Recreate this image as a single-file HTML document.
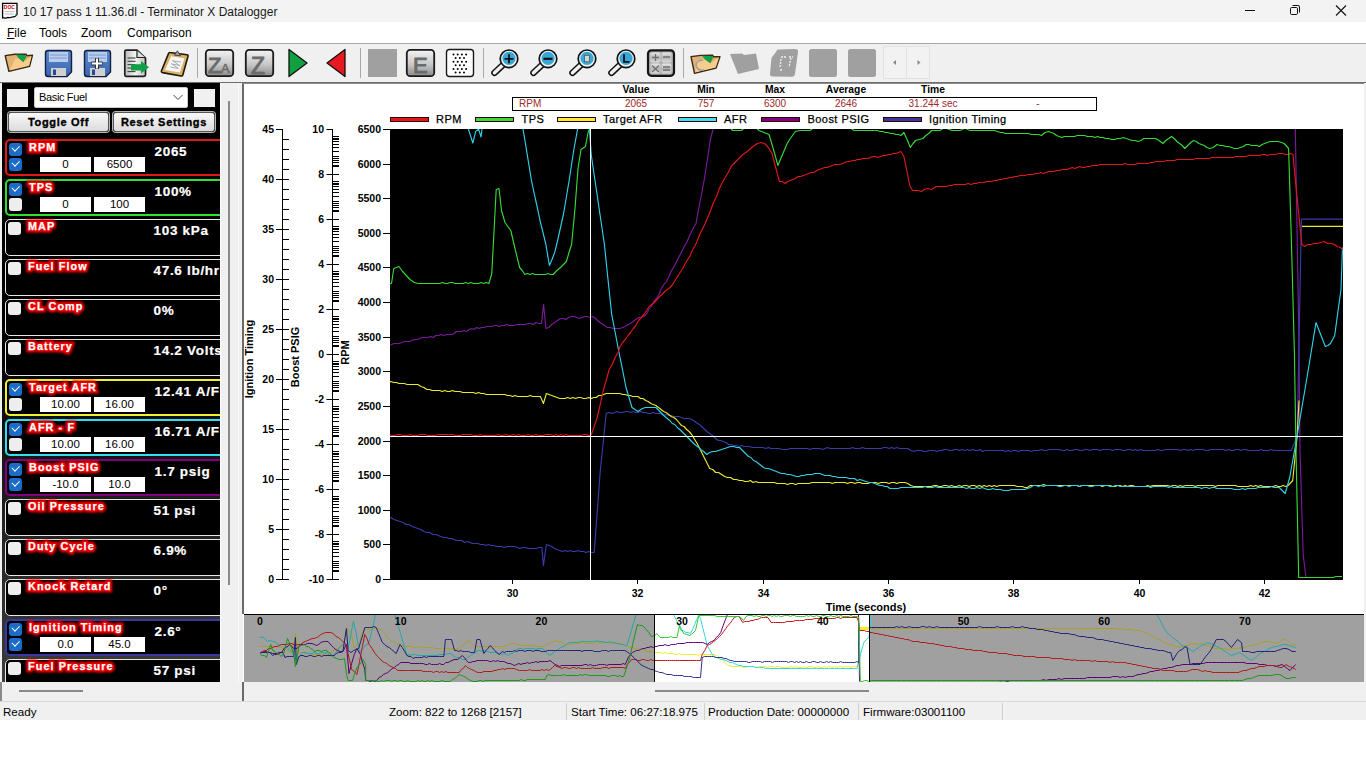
<!DOCTYPE html>
<html><head><meta charset="utf-8">
<style>
*{margin:0;padding:0;box-sizing:border-box}
html,body{width:1366px;height:770px;overflow:hidden;background:#fff;font-family:"Liberation Sans",sans-serif;position:relative}
.a{position:absolute}
#title{left:0;top:0;width:1366px;height:22px;background:#f3f3f3}
#title .t{left:23px;top:5px;font-size:12px;color:#1a1a1a;white-space:nowrap}
#menu{left:0;top:22px;width:1366px;height:22px;background:#fff;border-bottom:1px solid #a8a8a8}
#menu span{position:absolute;top:4px;font-size:12px;color:#000}
#tb{left:0;top:44px;width:1366px;height:39px;background:#f0f0f0;border-bottom:1px solid #6e6e6e}
.sep{position:absolute;top:6px;width:1px;height:29px;background:#a0a0a0}
#left{left:0;top:83px;width:243px;height:617px;background:#f0f0f0}
#lp{left:2px;top:83px;width:218px;height:599px;background:linear-gradient(#000 0%,#000 42%,#1e1e1e 70%,#3c3c3c 100%);overflow:hidden}
.item{position:absolute;left:3px;width:230px;height:37px;border:2px solid #fff;border-radius:5px;background:#000}
.cb{position:absolute;left:2px;width:13px;height:13px;border-radius:3px;background:#eee}
.cb.on{background:#1a6cc8}
.cb.on::after{content:"";position:absolute;left:3px;top:2px;width:6px;height:3.5px;border-left:1.3px solid #fff;border-bottom:1.3px solid #fff;transform:rotate(-45deg)}
.lbl{position:absolute;left:22px;top:0px;font-weight:bold;font-size:10.8px;letter-spacing:1.1px;color:#fff;white-space:nowrap;-webkit-text-stroke:0.25px #fff;text-shadow:0 0 1px #f00}
.lblg{position:absolute;left:22px;top:0px;font-weight:bold;font-size:10.8px;letter-spacing:1.1px;color:#e00;white-space:nowrap;-webkit-text-stroke:5px #e00;filter:blur(1.1px)}
.val{position:absolute;left:147.5px;top:3px;font-weight:bold;font-size:13.5px;letter-spacing:0.7px;-webkit-text-stroke:0.2px #fff;color:#fff;white-space:nowrap}
.inp{position:absolute;top:16px;width:51px;height:15px;background:#fff;font-size:11.5px;color:#000;text-align:center;line-height:15px}
#vs{left:220px;top:83px;width:23px;height:617px}
#chart{left:242px;top:83px;width:1122px;height:531px;background:#fff;border-left:2px solid #6a6a6a;border-top:1px solid #8a8a8a}
svg text{font-family:"Liberation Sans",sans-serif}
.ax{font-weight:bold;font-size:10.5px;fill:#000}
.lg{font-size:11px;fill:#000;letter-spacing:0.45px;stroke:#000;stroke-width:0.25px}
.th{font-weight:bold;font-size:10.3px;fill:#000}
.td{font-size:10px;fill:#a02828}
#status{left:0;top:701px;width:1366px;height:19px;background:#f0f0f0;border-top:1px solid #d8d8d8}
#status span{position:absolute;top:3px;font-size:11.6px;color:#000;white-space:nowrap}
#status i{position:absolute;top:1px;width:1px;height:17px;background:#d0d0d0}
</style></head><body>
<div id="title" class="a">
 <svg class="a" style="left:0;top:0" width="20" height="20" viewBox="0 0 20 20">
  <path d="M2.6 3.4 H17 V14.5 L15.2 16.3 C13.8 17.4 12.8 16.4 11.2 17.3 C9.6 18.3 8.2 16.9 6.6 17.8 C5 18.6 4 17.4 2.6 17.9 Z" fill="#fff" stroke="#000" stroke-width="1.3"/>
  <text x="3.8" y="9" font-size="5" font-weight="bold" fill="#c00" style="font-family:'Liberation Sans'">DOC</text>
  <line x1="5" y1="11.6" x2="14.5" y2="11.6" stroke="#aaa" stroke-width="0.8"/>
  <line x1="5" y1="14" x2="14" y2="14" stroke="#aaa" stroke-width="0.8"/>
  <path d="M16.5 14 L15.3 15.8" stroke="#2a8a8a" stroke-width="1.2"/>
 </svg>
 <div class="a t">10 17 pass 1 11.36.dl - Terminator X Datalogger</div>
 <svg class="a" style="left:1240px;top:0" width="126" height="22">
  <line x1="5" y1="10.5" x2="15" y2="10.5" stroke="#111" stroke-width="1"/>
  <rect x="50.5" y="7.5" width="7" height="7" rx="1.2" fill="none" stroke="#111"/>
  <path d="M52.5 5.5 H58 A1.5 1.5 0 0 1 59.5 7 V12.5" fill="none" stroke="#111"/>
  <path d="M96 5.5 L106 15.5 M106 5.5 L96 15.5" stroke="#111" stroke-width="1.1"/>
 </svg>
</div>
<div id="menu" class="a">
 <span style="left:7px"><u>F</u>ile</span>
 <span style="left:39px">Tools</span>
 <span style="left:81px">Zoom</span>
 <span style="left:127px">Comparison</span>
</div>
<div id="tb" class="a">
 <svg class="a" style="left:0;top:-1px" width="1366" height="40" viewBox="0 43 1366 40">
<defs><linearGradient id="zg" x1="0" y1="0" x2="0" y2="1"><stop offset="0" stop-color="#f4f4f4"/><stop offset="0.55" stop-color="#c8c8c8"/><stop offset="1" stop-color="#8a8a8a"/></linearGradient><linearGradient id="fl" x1="0" y1="0" x2="0" y2="1"><stop offset="0" stop-color="#5a8ad0"/><stop offset="1" stop-color="#3a66b0"/></linearGradient></defs>
<path d="M5.2 55.6 L14.8 54.3 L26 54.1 L27 55.8 L32.5 55.1 L29.6 66.2 L8.9 71.3 Z" fill="#e2b274" stroke="#3a2810" stroke-width="1.4" stroke-linejoin="round"/>
<path d="M9.6 70.4 L15.3 58.8 L19 58.3 L23.5 62 L31.5 56.4 L29 65.8 Z" fill="#f8cc8a"/>
<path d="M15.8 54.6 L25.6 55 L26.2 57.5 L23.2 62.2 L18.7 58.3 Z" fill="#10a048"/>
<path d="M48 50.5 H69 Q71.5 50.5 71.5 53 V72 L67 76.5 H48 Q45.5 76.5 45.5 74 V53 Q45.5 50.5 48 50.5 Z" fill="url(#fl)" stroke="#142040" stroke-width="1.4"/>
<rect x="49" y="52" width="19" height="10" fill="#b8ccec"/>
<line x1="50" y1="55" x2="67" y2="55" stroke="#7090c8" stroke-width="0.8"/><line x1="50" y1="58" x2="67" y2="58" stroke="#7090c8" stroke-width="0.8"/>
<rect x="51" y="68" width="15" height="8" fill="#d0d0d0"/><rect x="53" y="69.5" width="3" height="5.5" fill="#2a4a90"/>
<path d="M87 50.5 H108 Q110.5 50.5 110.5 53 V72 L106 76.5 H87 Q84.5 76.5 84.5 74 V53 Q84.5 50.5 87 50.5 Z" fill="url(#fl)" stroke="#142040" stroke-width="1.4"/>
<rect x="88" y="52" width="19" height="10" fill="#b8ccec"/>
<line x1="89" y1="55" x2="106" y2="55" stroke="#7090c8" stroke-width="0.8"/><line x1="89" y1="58" x2="106" y2="58" stroke="#7090c8" stroke-width="0.8"/>
<rect x="90" y="68" width="15" height="8" fill="#d0d0d0"/><rect x="92" y="69.5" width="3" height="5.5" fill="#2a4a90"/>
<path d="M97 58 V69 M91.5 63.5 H102.5" stroke="#333" stroke-width="4"/><path d="M97 58.5 V68.5 M92 63.5 H102" stroke="#fff" stroke-width="2"/>
<defs><linearGradient id="dg" x1="0" y1="0" x2="1" y2="0"><stop offset="0" stop-color="#b8b8b8"/><stop offset="0.5" stop-color="#f4f4f4"/><stop offset="1" stop-color="#c0c0c0"/></linearGradient></defs>
<path d="M126 50.2 H137 L145.5 58.2 V75 Q145.5 76.3 144 76.3 H126 Q124.8 76.3 124.8 75 V51.5 Q124.8 50.2 126 50.2 Z" fill="url(#dg)" stroke="#202020" stroke-width="1.7" stroke-linejoin="round"/>
<path d="M137 50.5 V57.5 H145.2" fill="#e0e0e0" stroke="#202020" stroke-width="1.2"/>
<line x1="127.5" y1="58" x2="135.5" y2="58" stroke="#404040" stroke-width="1.1"/>
<line x1="127.5" y1="61.3" x2="135.5" y2="61.3" stroke="#404040" stroke-width="1.1"/>
<line x1="127.5" y1="64.6" x2="135.5" y2="64.6" stroke="#404040" stroke-width="1.1"/>
<line x1="127.5" y1="68" x2="135.5" y2="68" stroke="#404040" stroke-width="1.1"/>
<line x1="127.5" y1="71.6" x2="135.5" y2="71.6" stroke="#404040" stroke-width="1.1"/>
<path d="M131 64.3 H141 V61 L149 67.2 L141 73.6 V70.6 H131 Z" fill="#10a048"/>
<path d="M170 52.5 L187 54.8 Q188.3 55 188 56.3 L182.8 75 Q182.4 76.3 181 76 L162.5 72.6 Q161 72.2 161.5 70.8 L168.5 53.6 Q169 52.3 170 52.5 Z" fill="#d8b068" stroke="#201808" stroke-width="1.6" stroke-linejoin="round"/>
<path d="M171.2 56.2 L184.5 58.2 L179.8 72.6 L165 70 Z" fill="#f6f6f6"/>
<path d="M174.5 55.2 L177.4 50.8 L180.5 55.8 Z" fill="#a0a0a0" stroke="#303030" stroke-width="0.8"/>
<path d="M173 61 L181 62 M172 64 L180 65.5 M170.5 67 L178.5 68.5 M172 60 L180 66 M171 63.5 L178 68" stroke="#999" stroke-width="0.8"/>
<line x1="197.5" y1="48" x2="197.5" y2="78" stroke="#a8a8a8"/>
<line x1="360.5" y1="48" x2="360.5" y2="78" stroke="#a8a8a8"/>
<line x1="483.5" y1="48" x2="483.5" y2="78" stroke="#a8a8a8"/>
<line x1="683.5" y1="48" x2="683.5" y2="78" stroke="#a8a8a8"/>
<rect x="205.8" y="49.8" width="27.4" height="26.4" rx="3.5" fill="url(#zg)" stroke="#1a1a1a" stroke-width="1.8"/>
<rect x="245.8" y="49.8" width="27.4" height="26.4" rx="3.5" fill="url(#zg)" stroke="#1a1a1a" stroke-width="1.8"/>
<text x="208" y="73" font-size="22" fill="#6a6a6a" stroke="#6a6a6a" stroke-width="0.9" style="font-family:'Liberation Sans'">Z</text><text x="221" y="73" font-size="13" fill="#6a6a6a" stroke="#6a6a6a" stroke-width="0.5" style="font-family:'Liberation Sans'">A</text>
<text x="251" y="73.5" font-size="23" fill="#6a6a6a" stroke="#6a6a6a" stroke-width="0.9" style="font-family:'Liberation Sans'">Z</text>
<path d="M289 49.5 L307 63 L289 76.5 Z" fill="#10a040" stroke="#101010" stroke-width="1.3" stroke-linejoin="round"/>
<path d="M345 49.5 L327 63 L345 76.5 Z" fill="#e81820" stroke="#101010" stroke-width="1.3" stroke-linejoin="round"/>
<rect x="368" y="49" width="29" height="28" fill="#a0a0a0"/>
<rect x="406.8" y="49.8" width="27.4" height="26.4" rx="3.5" fill="url(#zg)" stroke="#1a1a1a" stroke-width="1.8"/>
<text x="413" y="73" font-size="22" fill="#6a6a6a" stroke="#6a6a6a" stroke-width="0.9" style="font-family:'Liberation Sans'">E</text>
<rect x="446.5" y="49.5" width="27" height="27" rx="3" fill="#fff" stroke="#1a1a1a" stroke-width="1.4"/>
<circle cx="453.5" cy="54.5" r="1" fill="#000"/><circle cx="457.7" cy="54.5" r="1" fill="#000"/><circle cx="461.9" cy="54.5" r="1" fill="#000"/><circle cx="466.1" cy="54.5" r="1" fill="#000"/><circle cx="455.6" cy="58.1" r="1" fill="#000"/><circle cx="459.8" cy="58.1" r="1" fill="#000"/><circle cx="464.0" cy="58.1" r="1" fill="#000"/><circle cx="453.5" cy="61.7" r="1" fill="#000"/><circle cx="457.7" cy="61.7" r="1" fill="#000"/><circle cx="461.9" cy="61.7" r="1" fill="#000"/><circle cx="466.1" cy="61.7" r="1" fill="#000"/><circle cx="455.6" cy="65.3" r="1" fill="#000"/><circle cx="459.8" cy="65.3" r="1" fill="#000"/><circle cx="464.0" cy="65.3" r="1" fill="#000"/><circle cx="453.5" cy="68.9" r="1" fill="#000"/><circle cx="457.7" cy="68.9" r="1" fill="#000"/><circle cx="461.9" cy="68.9" r="1" fill="#000"/><circle cx="466.1" cy="68.9" r="1" fill="#000"/><circle cx="455.6" cy="72.5" r="1" fill="#000"/><circle cx="459.8" cy="72.5" r="1" fill="#000"/><circle cx="464.0" cy="72.5" r="1" fill="#000"/>
<path d="M502.5 65.3 L494.5 72.8" stroke="#101010" stroke-width="6.5" stroke-linecap="round"/>
<path d="M502.5 65.3 L494.5 72.8" stroke="#f0f0f0" stroke-width="3.6" stroke-linecap="round"/>
<circle cx="509" cy="58.8" r="8.8" fill="#e8f4f8" stroke="#101010" stroke-width="1.7"/>
<circle cx="509" cy="58.3" r="6.6" fill="#3aa6d6"/>
<path d="M509 54.3 V63.3 M504.5 58.8 H513.5" stroke="#101010" stroke-width="1.8"/>
<path d="M541.5 65.3 L533.5 72.8" stroke="#101010" stroke-width="6.5" stroke-linecap="round"/>
<path d="M541.5 65.3 L533.5 72.8" stroke="#f0f0f0" stroke-width="3.6" stroke-linecap="round"/>
<circle cx="548" cy="58.8" r="8.8" fill="#e8f4f8" stroke="#101010" stroke-width="1.7"/>
<circle cx="548" cy="58.3" r="6.6" fill="#3aa6d6"/>
<path d="M543.5 58.8 H552.5" stroke="#101010" stroke-width="2.2"/>
<path d="M580.5 65.3 L572.5 72.8" stroke="#101010" stroke-width="6.5" stroke-linecap="round"/>
<path d="M580.5 65.3 L572.5 72.8" stroke="#f0f0f0" stroke-width="3.6" stroke-linecap="round"/>
<circle cx="587" cy="58.8" r="8.8" fill="#e8f4f8" stroke="#101010" stroke-width="1.7"/>
<circle cx="587" cy="58.3" r="6.6" fill="#3aa6d6"/>
<rect x="584.5" y="55.3" width="5" height="6.5" fill="#c8d8e0" stroke="#555" stroke-width="0.8"/>
<path d="M619.5 65.3 L611.5 72.8" stroke="#101010" stroke-width="6.5" stroke-linecap="round"/>
<path d="M619.5 65.3 L611.5 72.8" stroke="#f0f0f0" stroke-width="3.6" stroke-linecap="round"/>
<circle cx="626" cy="58.8" r="8.8" fill="#e8f4f8" stroke="#101010" stroke-width="1.7"/>
<circle cx="626" cy="58.3" r="6.6" fill="#3aa6d6"/>
<path d="M624 54.3 V61.8 H629.5" fill="none" stroke="#101010" stroke-width="1.8"/>
<defs><linearGradient id="cg" x1="0" y1="0" x2="0" y2="1"><stop offset="0" stop-color="#e8e8e8"/><stop offset="0.5" stop-color="#b8b8b8"/><stop offset="1" stop-color="#d8d8d8"/></linearGradient></defs>
<rect x="648" y="50.3" width="26" height="25.5" rx="3.5" fill="#b0b0b0" stroke="#151515" stroke-width="2.2"/>
<rect x="650.5" y="52.5" width="10" height="10" rx="2" fill="url(#cg)"/>
<rect x="661.5" y="52.5" width="10" height="10" rx="2" fill="url(#cg)"/>
<rect x="650.5" y="63.5" width="10" height="10" rx="2" fill="url(#cg)"/>
<rect x="661.5" y="63.5" width="10" height="10" rx="2" fill="url(#cg)"/>
<path d="M652 57.5 H659 M655.5 54 V61 M663 57 H670 M652 65.5 L659 72 M659 65.5 L652 72 M663 67 H670 M663 70 H670" stroke="#707070" stroke-width="1.3"/>
<path d="M691 56.6 L700.9 55.4 L712.6 55.1 L713.5 56.8 L720 56.6 L716.1 68 L694.5 73.3 Z" fill="#e2b274" stroke="#3a2810" stroke-width="1.4" stroke-linejoin="round"/>
<path d="M695 72.5 L697 60 L704 59 L710.3 63.3 L719 57.5 L715.6 67.5 Z" fill="#f8cc8a"/>
<path d="M702 55.7 L712.6 56 L713 58 L710.3 63.3 L705 59.5 Z" fill="#10a048"/>
<path d="M703 60.5 A5 5 0 1 0 703.5 69.5" fill="none" stroke="#a0a0a0" stroke-width="1.6"/>
<path d="M730 54 L742 53.5 L744 55 L756 53.5 L759 69 L738 74 Z" fill="#a0a0a0"/>
<path d="M777 50.5 Q776 49.5 779 49.5 L795 49 Q798.5 49 798 52 L795 74 Q794.5 76.8 792 76.8 L773 76.5 Q769.5 76.5 770 73.5 L771.5 58 Z" fill="#a0a0a0"/>
<path d="M781 57 H786 M789 57 H793 M791 58 L789 67 M781 59 L780 67 M780 70 H782" stroke="#f0f0f0" stroke-width="1.3" stroke-dasharray="2 1"/>
<rect x="809" y="49" width="28" height="28" rx="2.5" fill="#a0a0a0"/>
<rect x="848" y="49" width="28" height="28" rx="2.5" fill="#a0a0a0"/>
<rect x="883.5" y="46.5" width="23" height="32" fill="#f2f2f2" stroke="#e2e2e2"/><rect x="906.5" y="46.5" width="23" height="32" fill="#f2f2f2" stroke="#e2e2e2"/>
<path d="M896 60 L893 62.5 L896 65 Z" fill="#888"/><path d="M917.5 60 L920.5 62.5 L917.5 65 Z" fill="#888"/>
</svg>
</div>
<div id="left" class="a"></div>
<div id="lp" class="a">
 <div class="a" style="left:5px;top:6px;width:21px;height:18px;background:#f0f0f0"></div>
<div class="a" style="left:32px;top:4px;width:154px;height:21px;background:#fff;border:1px solid #c8c8c8;border-radius:2px;font-size:11px;letter-spacing:-0.35px;line-height:19px;padding-left:4px;color:#000">Basic Fuel<svg class="a" style="left:138px;top:6px" width="10" height="7"><path d="M0.5 1 L5 5.5 L9.5 1" fill="none" stroke="#444" stroke-width="1"/></svg></div>
<div class="a" style="left:192px;top:6px;width:21px;height:18px;background:#f0f0f0"></div>
<div style="position:absolute;top:29px;height:20px;border:1px solid #555;border-radius:3px;background:linear-gradient(#f8f8f8,#dcdcdc);font-weight:bold;font-size:11px;letter-spacing:0.7px;-webkit-text-stroke:0.35px #000;text-align:center;line-height:19px;color:#000;box-shadow:0 0 0 1px #b8b8b8;left:6px;width:101px">Toggle Off</div>
<div style="position:absolute;top:29px;height:20px;border:1px solid #555;border-radius:3px;background:linear-gradient(#f8f8f8,#dcdcdc);font-weight:bold;font-size:11px;letter-spacing:0.7px;-webkit-text-stroke:0.35px #000;text-align:center;line-height:19px;color:#000;box-shadow:0 0 0 1px #b8b8b8;left:111px;width:102px">Reset Settings</div>
<div class="item" style="top:56px;border-color:#e01818;border-width:2px">
<div class="cb on" style="top:2px"></div>
<div class="cb on" style="top:17px"></div>
<div class="inp" style="left:33px">0</div><div class="inp" style="left:87px">6500</div>
<div class="lblg">RPM</div><div class="lbl">RPM</div><div class="val">2065</div>
</div>
<div class="item" style="top:96px;border-color:#30e030;border-width:2px">
<div class="cb on" style="top:2px"></div>
<div class="cb" style="top:17px"></div>
<div class="inp" style="left:33px">0</div><div class="inp" style="left:87px">100</div>
<div class="lblg">TPS</div><div class="lbl">TPS</div><div class="val">100%</div>
</div>
<div class="item" style="top:136px;border-color:#e8e8e8;border-width:1.5px">
<div class="cb" style="top:2px"></div>
<div class="lblg">MAP</div><div class="lbl">MAP</div><div class="val">103 kPa</div>
</div>
<div class="item" style="top:176px;border-color:#e8e8e8;border-width:1.5px">
<div class="cb" style="top:2px"></div>
<div class="lblg">Fuel Flow</div><div class="lbl">Fuel Flow</div><div class="val">47.6 lb/hr</div>
</div>
<div class="item" style="top:216px;border-color:#e8e8e8;border-width:1.5px">
<div class="cb" style="top:2px"></div>
<div class="lblg">CL Comp</div><div class="lbl">CL Comp</div><div class="val">0%</div>
</div>
<div class="item" style="top:256px;border-color:#e8e8e8;border-width:1.5px">
<div class="cb" style="top:2px"></div>
<div class="lblg">Battery</div><div class="lbl">Battery</div><div class="val">14.2 Volts</div>
</div>
<div class="item" style="top:296px;border-color:#f0f030;border-width:2px">
<div class="cb on" style="top:2px"></div>
<div class="cb" style="top:17px"></div>
<div class="inp" style="left:33px">10.00</div><div class="inp" style="left:87px">16.00</div>
<div class="lblg">Target AFR</div><div class="lbl">Target AFR</div><div class="val">12.41 A/F</div>
</div>
<div class="item" style="top:336px;border-color:#30e0f0;border-width:2px">
<div class="cb on" style="top:2px"></div>
<div class="cb" style="top:17px"></div>
<div class="inp" style="left:33px">10.00</div><div class="inp" style="left:87px">16.00</div>
<div class="lblg">AFR - F</div><div class="lbl">AFR - F</div><div class="val">16.71 A/F</div>
</div>
<div class="item" style="top:376px;border-color:#800080;border-width:2px">
<div class="cb on" style="top:2px"></div>
<div class="cb on" style="top:17px"></div>
<div class="inp" style="left:33px">-10.0</div><div class="inp" style="left:87px">10.0</div>
<div class="lblg">Boost PSIG</div><div class="lbl">Boost PSIG</div><div class="val">1.7 psig</div>
</div>
<div class="item" style="top:416px;border-color:#e8e8e8;border-width:1.5px">
<div class="cb" style="top:2px"></div>
<div class="lblg">Oil Pressure</div><div class="lbl">Oil Pressure</div><div class="val">51 psi</div>
</div>
<div class="item" style="top:456px;border-color:#e8e8e8;border-width:1.5px">
<div class="cb" style="top:2px"></div>
<div class="lblg">Duty Cycle</div><div class="lbl">Duty Cycle</div><div class="val">6.9%</div>
</div>
<div class="item" style="top:496px;border-color:#e8e8e8;border-width:1.5px">
<div class="cb" style="top:2px"></div>
<div class="lblg">Knock Retard</div><div class="lbl">Knock Retard</div><div class="val">0°</div>
</div>
<div class="item" style="top:536px;border-color:#3838a0;border-width:2px">
<div class="cb on" style="top:2px"></div>
<div class="cb on" style="top:17px"></div>
<div class="inp" style="left:33px">0.0</div><div class="inp" style="left:87px">45.0</div>
<div class="lblg">Ignition Timing</div><div class="lbl">Ignition Timing</div><div class="val">2.6°</div>
</div>
<div class="item" style="top:576px;border-color:#e8e8e8;border-width:1.5px">
<div class="cb" style="top:2px"></div>
<div class="lblg">Fuel Pressure</div><div class="lbl">Fuel Pressure</div><div class="val">57 psi</div>
</div>
</div>
<div id="vs" class="a">
 <div class="a" style="left:0;top:0;width:1px;height:599px;background:#fff"></div>
 <div class="a" style="left:18px;top:0;width:1px;height:617px;background:#fafafa"></div>
 <div class="a" style="left:8px;top:18px;width:2px;height:484px;background:#8a8a8a"></div>
</div>
<div class="a" style="left:0;top:682px;width:243px;height:19px;background:#f0f0f0;border-left:2px solid #8a8a8a"><div class="a" style="left:17px;top:8px;width:64px;height:2px;background:#8a8a8a"></div></div>
<div id="chart" class="a"></div>
<svg class="a" style="left:0;top:0" width="1366" height="700">
 <rect x="390.5" y="117.5" width="38" height="4" fill="#e01818" stroke="#300" stroke-width="1"/>
<text x="436" y="123" class="lg">RPM</text>
<rect x="475.5" y="117.5" width="38" height="4" fill="#38d838" stroke="#300" stroke-width="1"/>
<text x="521.5" y="123" class="lg">TPS</text>
<rect x="557.5" y="117.5" width="38" height="4" fill="#f0f030" stroke="#300" stroke-width="1"/>
<text x="603" y="123" class="lg">Target AFR</text>
<rect x="678.5" y="117.5" width="38" height="4" fill="#40e0f0" stroke="#300" stroke-width="1"/>
<text x="724" y="123" class="lg">AFR</text>
<rect x="761.5" y="117.5" width="38" height="4" fill="#800080" stroke="#300" stroke-width="1"/>
<text x="807.5" y="123" class="lg">Boost PSIG</text>
<rect x="883.5" y="117.5" width="38" height="4" fill="#3838a0" stroke="#300" stroke-width="1"/>
<text x="929" y="123" class="lg">Ignition Timing</text>
<rect x="512.5" y="97.5" width="584" height="13" fill="#fff" stroke="#000" stroke-width="1"/>
<text x="636" y="93" text-anchor="middle" class="th">Value</text>
<text x="706" y="93" text-anchor="middle" class="th">Min</text>
<text x="775" y="93" text-anchor="middle" class="th">Max</text>
<text x="846" y="93" text-anchor="middle" class="th">Average</text>
<text x="933" y="93" text-anchor="middle" class="th">Time</text>
<text x="519" y="107" class="td">RPM</text>
<text x="636" y="107" text-anchor="middle" class="td">2065</text>
<text x="706" y="107" text-anchor="middle" class="td">757</text>
<text x="775" y="107" text-anchor="middle" class="td">6300</text>
<text x="846" y="107" text-anchor="middle" class="td">2646</text>
<text x="933" y="107" text-anchor="middle" class="td">31.244 sec</text>
<text x="1038" y="107" text-anchor="middle" class="td">-</text>
 <line x1="282.5" y1="129" x2="282.5" y2="580" stroke="#000"/>
<line x1="276" y1="579.5" x2="289" y2="579.5" stroke="#000"/>
<text x="274" y="583.1" text-anchor="end" class="ax">0</text>
<line x1="282.5" y1="569.5" x2="289" y2="569.5" stroke="#000"/>
<line x1="282.5" y1="559.5" x2="289" y2="559.5" stroke="#000"/>
<line x1="282.5" y1="549.5" x2="289" y2="549.5" stroke="#000"/>
<line x1="282.5" y1="539.5" x2="289" y2="539.5" stroke="#000"/>
<line x1="276" y1="529.5" x2="289" y2="529.5" stroke="#000"/>
<text x="274" y="533.1" text-anchor="end" class="ax">5</text>
<line x1="282.5" y1="519.5" x2="289" y2="519.5" stroke="#000"/>
<line x1="282.5" y1="509.5" x2="289" y2="509.5" stroke="#000"/>
<line x1="282.5" y1="499.5" x2="289" y2="499.5" stroke="#000"/>
<line x1="282.5" y1="489.5" x2="289" y2="489.5" stroke="#000"/>
<line x1="276" y1="479.5" x2="289" y2="479.5" stroke="#000"/>
<text x="274" y="483.1" text-anchor="end" class="ax">10</text>
<line x1="282.5" y1="469.5" x2="289" y2="469.5" stroke="#000"/>
<line x1="282.5" y1="459.5" x2="289" y2="459.5" stroke="#000"/>
<line x1="282.5" y1="449.5" x2="289" y2="449.5" stroke="#000"/>
<line x1="282.5" y1="439.5" x2="289" y2="439.5" stroke="#000"/>
<line x1="276" y1="429.5" x2="289" y2="429.5" stroke="#000"/>
<text x="274" y="433.1" text-anchor="end" class="ax">15</text>
<line x1="282.5" y1="419.5" x2="289" y2="419.5" stroke="#000"/>
<line x1="282.5" y1="409.5" x2="289" y2="409.5" stroke="#000"/>
<line x1="282.5" y1="399.5" x2="289" y2="399.5" stroke="#000"/>
<line x1="282.5" y1="389.5" x2="289" y2="389.5" stroke="#000"/>
<line x1="276" y1="379.5" x2="289" y2="379.5" stroke="#000"/>
<text x="274" y="383.1" text-anchor="end" class="ax">20</text>
<line x1="282.5" y1="369.5" x2="289" y2="369.5" stroke="#000"/>
<line x1="282.5" y1="359.5" x2="289" y2="359.5" stroke="#000"/>
<line x1="282.5" y1="349.5" x2="289" y2="349.5" stroke="#000"/>
<line x1="282.5" y1="339.5" x2="289" y2="339.5" stroke="#000"/>
<line x1="276" y1="329.5" x2="289" y2="329.5" stroke="#000"/>
<text x="274" y="333.1" text-anchor="end" class="ax">25</text>
<line x1="282.5" y1="319.5" x2="289" y2="319.5" stroke="#000"/>
<line x1="282.5" y1="309.5" x2="289" y2="309.5" stroke="#000"/>
<line x1="282.5" y1="299.5" x2="289" y2="299.5" stroke="#000"/>
<line x1="282.5" y1="289.5" x2="289" y2="289.5" stroke="#000"/>
<line x1="276" y1="279.5" x2="289" y2="279.5" stroke="#000"/>
<text x="274" y="283.1" text-anchor="end" class="ax">30</text>
<line x1="282.5" y1="269.5" x2="289" y2="269.5" stroke="#000"/>
<line x1="282.5" y1="259.5" x2="289" y2="259.5" stroke="#000"/>
<line x1="282.5" y1="249.5" x2="289" y2="249.5" stroke="#000"/>
<line x1="282.5" y1="239.5" x2="289" y2="239.5" stroke="#000"/>
<line x1="276" y1="229.5" x2="289" y2="229.5" stroke="#000"/>
<text x="274" y="233.1" text-anchor="end" class="ax">35</text>
<line x1="282.5" y1="219.5" x2="289" y2="219.5" stroke="#000"/>
<line x1="282.5" y1="209.5" x2="289" y2="209.5" stroke="#000"/>
<line x1="282.5" y1="199.5" x2="289" y2="199.5" stroke="#000"/>
<line x1="282.5" y1="189.5" x2="289" y2="189.5" stroke="#000"/>
<line x1="276" y1="179.5" x2="289" y2="179.5" stroke="#000"/>
<text x="274" y="183.1" text-anchor="end" class="ax">40</text>
<line x1="282.5" y1="169.5" x2="289" y2="169.5" stroke="#000"/>
<line x1="282.5" y1="159.5" x2="289" y2="159.5" stroke="#000"/>
<line x1="282.5" y1="149.5" x2="289" y2="149.5" stroke="#000"/>
<line x1="282.5" y1="139.5" x2="289" y2="139.5" stroke="#000"/>
<line x1="276" y1="129.5" x2="282.5" y2="129.5" stroke="#000"/>
<text x="274" y="133.1" text-anchor="end" class="ax">45</text>
<line x1="332.5" y1="129" x2="332.5" y2="580" stroke="#000"/>
<line x1="326.5" y1="579.5" x2="339" y2="579.5" stroke="#000"/>
<text x="324" y="583.1" text-anchor="end" class="ax">-10</text>
<line x1="326.5" y1="534.5" x2="339" y2="534.5" stroke="#000"/>
<text x="324" y="538.1" text-anchor="end" class="ax">-8</text>
<line x1="326.5" y1="489.5" x2="339" y2="489.5" stroke="#000"/>
<text x="324" y="493.1" text-anchor="end" class="ax">-6</text>
<line x1="326.5" y1="444.5" x2="339" y2="444.5" stroke="#000"/>
<text x="324" y="448.1" text-anchor="end" class="ax">-4</text>
<line x1="326.5" y1="399.5" x2="339" y2="399.5" stroke="#000"/>
<text x="324" y="403.1" text-anchor="end" class="ax">-2</text>
<line x1="326.5" y1="354.5" x2="339" y2="354.5" stroke="#000"/>
<text x="324" y="358.1" text-anchor="end" class="ax">0</text>
<line x1="326.5" y1="309.5" x2="339" y2="309.5" stroke="#000"/>
<text x="324" y="313.1" text-anchor="end" class="ax">2</text>
<line x1="326.5" y1="264.5" x2="339" y2="264.5" stroke="#000"/>
<text x="324" y="268.1" text-anchor="end" class="ax">4</text>
<line x1="326.5" y1="219.5" x2="339" y2="219.5" stroke="#000"/>
<text x="324" y="223.1" text-anchor="end" class="ax">6</text>
<line x1="326.5" y1="174.5" x2="339" y2="174.5" stroke="#000"/>
<text x="324" y="178.1" text-anchor="end" class="ax">8</text>
<line x1="326.5" y1="129.5" x2="332.5" y2="129.5" stroke="#000"/>
<text x="324" y="133.1" text-anchor="end" class="ax">10</text>
<line x1="332.5" y1="136.5" x2="339" y2="136.5" stroke="#000"/>
<line x1="332.5" y1="138.5" x2="339" y2="138.5" stroke="#000"/>
<line x1="332.5" y1="139.5" x2="339" y2="139.5" stroke="#000"/>
<line x1="332.5" y1="141.5" x2="339" y2="141.5" stroke="#000"/>
<line x1="332.5" y1="144.5" x2="339" y2="144.5" stroke="#000"/>
<line x1="332.5" y1="147.5" x2="339" y2="147.5" stroke="#000"/>
<line x1="332.5" y1="151.5" x2="339" y2="151.5" stroke="#000"/>
<line x1="332.5" y1="156.5" x2="339" y2="156.5" stroke="#000"/>
<line x1="332.5" y1="158.5" x2="339" y2="158.5" stroke="#000"/>
<line x1="332.5" y1="160.5" x2="339" y2="160.5" stroke="#000"/>
<line x1="332.5" y1="162.5" x2="339" y2="162.5" stroke="#000"/>
<line x1="332.5" y1="165.5" x2="339" y2="165.5" stroke="#000"/>
<line x1="332.5" y1="166.5" x2="339" y2="166.5" stroke="#000"/>
<line x1="332.5" y1="181.5" x2="339" y2="181.5" stroke="#000"/>
<line x1="332.5" y1="183.5" x2="339" y2="183.5" stroke="#000"/>
<line x1="332.5" y1="184.5" x2="339" y2="184.5" stroke="#000"/>
<line x1="332.5" y1="186.5" x2="339" y2="186.5" stroke="#000"/>
<line x1="332.5" y1="189.5" x2="339" y2="189.5" stroke="#000"/>
<line x1="332.5" y1="192.5" x2="339" y2="192.5" stroke="#000"/>
<line x1="332.5" y1="196.5" x2="339" y2="196.5" stroke="#000"/>
<line x1="332.5" y1="201.5" x2="339" y2="201.5" stroke="#000"/>
<line x1="332.5" y1="203.5" x2="339" y2="203.5" stroke="#000"/>
<line x1="332.5" y1="205.5" x2="339" y2="205.5" stroke="#000"/>
<line x1="332.5" y1="207.5" x2="339" y2="207.5" stroke="#000"/>
<line x1="332.5" y1="210.5" x2="339" y2="210.5" stroke="#000"/>
<line x1="332.5" y1="211.5" x2="339" y2="211.5" stroke="#000"/>
<line x1="332.5" y1="226.5" x2="339" y2="226.5" stroke="#000"/>
<line x1="332.5" y1="228.5" x2="339" y2="228.5" stroke="#000"/>
<line x1="332.5" y1="229.5" x2="339" y2="229.5" stroke="#000"/>
<line x1="332.5" y1="231.5" x2="339" y2="231.5" stroke="#000"/>
<line x1="332.5" y1="234.5" x2="339" y2="234.5" stroke="#000"/>
<line x1="332.5" y1="237.5" x2="339" y2="237.5" stroke="#000"/>
<line x1="332.5" y1="241.5" x2="339" y2="241.5" stroke="#000"/>
<line x1="332.5" y1="246.5" x2="339" y2="246.5" stroke="#000"/>
<line x1="332.5" y1="248.5" x2="339" y2="248.5" stroke="#000"/>
<line x1="332.5" y1="250.5" x2="339" y2="250.5" stroke="#000"/>
<line x1="332.5" y1="252.5" x2="339" y2="252.5" stroke="#000"/>
<line x1="332.5" y1="255.5" x2="339" y2="255.5" stroke="#000"/>
<line x1="332.5" y1="256.5" x2="339" y2="256.5" stroke="#000"/>
<line x1="332.5" y1="271.5" x2="339" y2="271.5" stroke="#000"/>
<line x1="332.5" y1="273.5" x2="339" y2="273.5" stroke="#000"/>
<line x1="332.5" y1="274.5" x2="339" y2="274.5" stroke="#000"/>
<line x1="332.5" y1="276.5" x2="339" y2="276.5" stroke="#000"/>
<line x1="332.5" y1="279.5" x2="339" y2="279.5" stroke="#000"/>
<line x1="332.5" y1="282.5" x2="339" y2="282.5" stroke="#000"/>
<line x1="332.5" y1="286.5" x2="339" y2="286.5" stroke="#000"/>
<line x1="332.5" y1="291.5" x2="339" y2="291.5" stroke="#000"/>
<line x1="332.5" y1="293.5" x2="339" y2="293.5" stroke="#000"/>
<line x1="332.5" y1="295.5" x2="339" y2="295.5" stroke="#000"/>
<line x1="332.5" y1="297.5" x2="339" y2="297.5" stroke="#000"/>
<line x1="332.5" y1="300.5" x2="339" y2="300.5" stroke="#000"/>
<line x1="332.5" y1="301.5" x2="339" y2="301.5" stroke="#000"/>
<line x1="332.5" y1="316.5" x2="339" y2="316.5" stroke="#000"/>
<line x1="332.5" y1="318.5" x2="339" y2="318.5" stroke="#000"/>
<line x1="332.5" y1="319.5" x2="339" y2="319.5" stroke="#000"/>
<line x1="332.5" y1="321.5" x2="339" y2="321.5" stroke="#000"/>
<line x1="332.5" y1="324.5" x2="339" y2="324.5" stroke="#000"/>
<line x1="332.5" y1="327.5" x2="339" y2="327.5" stroke="#000"/>
<line x1="332.5" y1="331.5" x2="339" y2="331.5" stroke="#000"/>
<line x1="332.5" y1="336.5" x2="339" y2="336.5" stroke="#000"/>
<line x1="332.5" y1="338.5" x2="339" y2="338.5" stroke="#000"/>
<line x1="332.5" y1="340.5" x2="339" y2="340.5" stroke="#000"/>
<line x1="332.5" y1="342.5" x2="339" y2="342.5" stroke="#000"/>
<line x1="332.5" y1="345.5" x2="339" y2="345.5" stroke="#000"/>
<line x1="332.5" y1="346.5" x2="339" y2="346.5" stroke="#000"/>
<line x1="332.5" y1="361.5" x2="339" y2="361.5" stroke="#000"/>
<line x1="332.5" y1="363.5" x2="339" y2="363.5" stroke="#000"/>
<line x1="332.5" y1="364.5" x2="339" y2="364.5" stroke="#000"/>
<line x1="332.5" y1="366.5" x2="339" y2="366.5" stroke="#000"/>
<line x1="332.5" y1="369.5" x2="339" y2="369.5" stroke="#000"/>
<line x1="332.5" y1="372.5" x2="339" y2="372.5" stroke="#000"/>
<line x1="332.5" y1="376.5" x2="339" y2="376.5" stroke="#000"/>
<line x1="332.5" y1="381.5" x2="339" y2="381.5" stroke="#000"/>
<line x1="332.5" y1="383.5" x2="339" y2="383.5" stroke="#000"/>
<line x1="332.5" y1="385.5" x2="339" y2="385.5" stroke="#000"/>
<line x1="332.5" y1="387.5" x2="339" y2="387.5" stroke="#000"/>
<line x1="332.5" y1="390.5" x2="339" y2="390.5" stroke="#000"/>
<line x1="332.5" y1="391.5" x2="339" y2="391.5" stroke="#000"/>
<line x1="332.5" y1="406.5" x2="339" y2="406.5" stroke="#000"/>
<line x1="332.5" y1="408.5" x2="339" y2="408.5" stroke="#000"/>
<line x1="332.5" y1="409.5" x2="339" y2="409.5" stroke="#000"/>
<line x1="332.5" y1="411.5" x2="339" y2="411.5" stroke="#000"/>
<line x1="332.5" y1="414.5" x2="339" y2="414.5" stroke="#000"/>
<line x1="332.5" y1="417.5" x2="339" y2="417.5" stroke="#000"/>
<line x1="332.5" y1="421.5" x2="339" y2="421.5" stroke="#000"/>
<line x1="332.5" y1="426.5" x2="339" y2="426.5" stroke="#000"/>
<line x1="332.5" y1="428.5" x2="339" y2="428.5" stroke="#000"/>
<line x1="332.5" y1="430.5" x2="339" y2="430.5" stroke="#000"/>
<line x1="332.5" y1="432.5" x2="339" y2="432.5" stroke="#000"/>
<line x1="332.5" y1="435.5" x2="339" y2="435.5" stroke="#000"/>
<line x1="332.5" y1="436.5" x2="339" y2="436.5" stroke="#000"/>
<line x1="332.5" y1="451.5" x2="339" y2="451.5" stroke="#000"/>
<line x1="332.5" y1="453.5" x2="339" y2="453.5" stroke="#000"/>
<line x1="332.5" y1="454.5" x2="339" y2="454.5" stroke="#000"/>
<line x1="332.5" y1="456.5" x2="339" y2="456.5" stroke="#000"/>
<line x1="332.5" y1="459.5" x2="339" y2="459.5" stroke="#000"/>
<line x1="332.5" y1="462.5" x2="339" y2="462.5" stroke="#000"/>
<line x1="332.5" y1="466.5" x2="339" y2="466.5" stroke="#000"/>
<line x1="332.5" y1="471.5" x2="339" y2="471.5" stroke="#000"/>
<line x1="332.5" y1="473.5" x2="339" y2="473.5" stroke="#000"/>
<line x1="332.5" y1="475.5" x2="339" y2="475.5" stroke="#000"/>
<line x1="332.5" y1="477.5" x2="339" y2="477.5" stroke="#000"/>
<line x1="332.5" y1="480.5" x2="339" y2="480.5" stroke="#000"/>
<line x1="332.5" y1="481.5" x2="339" y2="481.5" stroke="#000"/>
<line x1="332.5" y1="496.5" x2="339" y2="496.5" stroke="#000"/>
<line x1="332.5" y1="498.5" x2="339" y2="498.5" stroke="#000"/>
<line x1="332.5" y1="499.5" x2="339" y2="499.5" stroke="#000"/>
<line x1="332.5" y1="501.5" x2="339" y2="501.5" stroke="#000"/>
<line x1="332.5" y1="504.5" x2="339" y2="504.5" stroke="#000"/>
<line x1="332.5" y1="507.5" x2="339" y2="507.5" stroke="#000"/>
<line x1="332.5" y1="511.5" x2="339" y2="511.5" stroke="#000"/>
<line x1="332.5" y1="516.5" x2="339" y2="516.5" stroke="#000"/>
<line x1="332.5" y1="518.5" x2="339" y2="518.5" stroke="#000"/>
<line x1="332.5" y1="520.5" x2="339" y2="520.5" stroke="#000"/>
<line x1="332.5" y1="522.5" x2="339" y2="522.5" stroke="#000"/>
<line x1="332.5" y1="525.5" x2="339" y2="525.5" stroke="#000"/>
<line x1="332.5" y1="526.5" x2="339" y2="526.5" stroke="#000"/>
<line x1="332.5" y1="541.5" x2="339" y2="541.5" stroke="#000"/>
<line x1="332.5" y1="543.5" x2="339" y2="543.5" stroke="#000"/>
<line x1="332.5" y1="544.5" x2="339" y2="544.5" stroke="#000"/>
<line x1="332.5" y1="546.5" x2="339" y2="546.5" stroke="#000"/>
<line x1="332.5" y1="549.5" x2="339" y2="549.5" stroke="#000"/>
<line x1="332.5" y1="552.5" x2="339" y2="552.5" stroke="#000"/>
<line x1="332.5" y1="556.5" x2="339" y2="556.5" stroke="#000"/>
<line x1="332.5" y1="561.5" x2="339" y2="561.5" stroke="#000"/>
<line x1="332.5" y1="563.5" x2="339" y2="563.5" stroke="#000"/>
<line x1="332.5" y1="565.5" x2="339" y2="565.5" stroke="#000"/>
<line x1="332.5" y1="567.5" x2="339" y2="567.5" stroke="#000"/>
<line x1="332.5" y1="570.5" x2="339" y2="570.5" stroke="#000"/>
<line x1="332.5" y1="571.5" x2="339" y2="571.5" stroke="#000"/>
<line x1="383" y1="579.5" x2="390" y2="579.5" stroke="#000"/>
<text x="381" y="583.1" text-anchor="end" class="ax">0</text>
<line x1="383" y1="544.5" x2="390" y2="544.5" stroke="#000"/>
<text x="381" y="548.1" text-anchor="end" class="ax">500</text>
<line x1="383" y1="510.5" x2="390" y2="510.5" stroke="#000"/>
<text x="381" y="514.1" text-anchor="end" class="ax">1000</text>
<line x1="383" y1="475.5" x2="390" y2="475.5" stroke="#000"/>
<text x="381" y="479.1" text-anchor="end" class="ax">1500</text>
<line x1="383" y1="441.5" x2="390" y2="441.5" stroke="#000"/>
<text x="381" y="445.1" text-anchor="end" class="ax">2000</text>
<line x1="383" y1="406.5" x2="390" y2="406.5" stroke="#000"/>
<text x="381" y="410.1" text-anchor="end" class="ax">2500</text>
<line x1="383" y1="371.5" x2="390" y2="371.5" stroke="#000"/>
<text x="381" y="375.1" text-anchor="end" class="ax">3000</text>
<line x1="383" y1="337.5" x2="390" y2="337.5" stroke="#000"/>
<text x="381" y="341.1" text-anchor="end" class="ax">3500</text>
<line x1="383" y1="302.5" x2="390" y2="302.5" stroke="#000"/>
<text x="381" y="306.1" text-anchor="end" class="ax">4000</text>
<line x1="383" y1="267.5" x2="390" y2="267.5" stroke="#000"/>
<text x="381" y="271.1" text-anchor="end" class="ax">4500</text>
<line x1="383" y1="233.5" x2="390" y2="233.5" stroke="#000"/>
<text x="381" y="237.1" text-anchor="end" class="ax">5000</text>
<line x1="383" y1="198.5" x2="390" y2="198.5" stroke="#000"/>
<text x="381" y="202.1" text-anchor="end" class="ax">5500</text>
<line x1="383" y1="164.5" x2="390" y2="164.5" stroke="#000"/>
<text x="381" y="168.1" text-anchor="end" class="ax">6000</text>
<line x1="383" y1="129.5" x2="390" y2="129.5" stroke="#000"/>
<text x="381" y="133.1" text-anchor="end" class="ax">6500</text>
<line x1="512.5" y1="580" x2="512.5" y2="584" stroke="#000"/>
<text x="512.5" y="597" text-anchor="middle" class="ax">30</text>
<line x1="637.5" y1="580" x2="637.5" y2="584" stroke="#000"/>
<text x="637.5" y="597" text-anchor="middle" class="ax">32</text>
<line x1="763.5" y1="580" x2="763.5" y2="584" stroke="#000"/>
<text x="763.5" y="597" text-anchor="middle" class="ax">34</text>
<line x1="888.5" y1="580" x2="888.5" y2="584" stroke="#000"/>
<text x="888.5" y="597" text-anchor="middle" class="ax">36</text>
<line x1="1013.5" y1="580" x2="1013.5" y2="584" stroke="#000"/>
<text x="1013.5" y="597" text-anchor="middle" class="ax">38</text>
<line x1="1139.5" y1="580" x2="1139.5" y2="584" stroke="#000"/>
<text x="1139.5" y="597" text-anchor="middle" class="ax">40</text>
<line x1="1264.5" y1="580" x2="1264.5" y2="584" stroke="#000"/>
<text x="1264.5" y="597" text-anchor="middle" class="ax">42</text>
<text x="866" y="611" text-anchor="middle" class="ax" style="font-size:11px">Time (seconds)</text>
<text transform="translate(252.5,359) rotate(-90)" text-anchor="middle" class="ax" style="font-size:11px">Ignition Timing</text>
<text transform="translate(298.5,357) rotate(-90)" text-anchor="middle" class="ax" style="font-size:11px">Boost PSIG</text>
<text transform="translate(349,352.5) rotate(-90)" text-anchor="middle" class="ax" style="font-size:11px">RPM</text>
 <rect x="390" y="129" width="953" height="451" fill="#000"/>
<svg x="390" y="129" width="953" height="451" viewBox="390 129 953 451" overflow="hidden">
<polyline fill="none" stroke="#7a1a9a" stroke-width="1.15" stroke-linejoin="round" points="390.0,345.0 391.5,344.5 394.1,343.5 396.6,343.5 399.2,343.5 401.8,342.5 404.4,341.5 406.9,341.5 409.5,341.5 412.1,340.5 414.6,339.5 417.2,339.5 419.9,338.5 422.5,337.5 425.2,337.5 427.9,337.5 430.5,336.5 433.2,337.5 435.8,335.5 438.5,335.5 441.2,334.5 443.8,335.5 446.5,334.5 449.0,334.5 451.5,334.5 454.0,333.5 456.5,331.5 459.0,331.5 461.5,331.5 464.1,330.5 466.6,331.5 469.1,329.5 471.6,328.5 474.1,329.5 476.6,327.5 479.1,328.5 481.6,327.5 484.1,327.5 486.6,326.5 489.1,326.5 491.6,326.5 494.1,325.5 496.6,325.5 499.2,326.5 501.7,325.5 504.2,325.5 506.7,324.5 509.2,325.5 511.7,325.5 514.2,325.5 516.7,324.5 519.5,324.5 522.2,324.5 525.0,324.5 527.7,323.5 530.5,323.5 533.2,324.5 536.0,322.5 538.7,323.5 541.5,323.5 543.6,304.5 545.9,328.5 548.8,327.5 551.7,324.5 554.7,322.5 557.6,320.5 560.5,318.5 563.2,318.5 565.9,319.5 568.5,317.5 571.2,316.5 573.9,316.5 576.6,317.5 579.3,318.5 582.0,317.5 584.7,316.5 587.3,316.5 590.0,317.5 592.7,316.5 595.6,318.5 598.5,321.5 601.5,323.5 604.4,325.5 607.3,327.5 610.2,327.5 613.1,328.5 616.5,328.5 620.0,328.5 622.6,327.5 625.3,326.5 627.9,324.5 630.5,323.5 633.1,321.5 635.8,319.5 638.4,317.5 641.0,317.5 643.7,316.5 646.3,314.5 648.8,309.5 651.3,306.5 653.8,301.5 656.4,298.5 658.9,294.5 661.4,288.5 663.9,284.5 666.4,281.5 669.0,276.5 671.5,270.5 674.1,266.5 676.6,261.5 679.2,256.5 681.8,251.5 684.3,246.5 687.2,241.5 690.1,234.5 693.1,228.5 696.0,223.5 698.9,207.5 701.9,192.5 704.8,176.5 707.7,157.5 710.6,138.5 713.0,129.5"/>
<polyline fill="none" stroke="#7a1a9a" stroke-width="1.15" stroke-linejoin="round" points="1295.3,129.0 1298.8,331.7 1300.0,450.0 1303.2,555.0 1306.0,577.6"/>
<polyline fill="none" stroke="#3a3aa8" stroke-width="1.15" stroke-linejoin="round" points="390.0,518.0 391.0,517.5 394.0,519.5 397.0,520.5 400.0,521.5 403.0,522.5 406.0,524.5 409.0,524.5 411.9,526.5 414.9,527.5 417.9,528.5 420.9,529.5 423.9,531.5 426.8,532.5 429.8,532.5 432.8,534.5 435.5,534.5 438.1,535.5 440.8,536.5 443.4,537.5 446.1,537.5 448.7,538.5 451.4,538.5 454.0,539.5 456.7,540.5 459.4,540.5 462.0,540.5 464.7,542.5 467.3,541.5 470.0,542.5 472.6,543.5 475.3,543.5 477.9,543.5 480.6,544.5 483.2,544.5 485.8,545.5 488.5,544.5 491.1,545.5 493.7,545.5 496.3,546.5 498.9,546.5 501.6,546.5 504.2,547.5 506.8,546.5 509.4,546.5 512.0,546.5 514.6,546.5 517.3,547.5 519.9,548.5 522.5,547.5 525.3,547.5 528.0,548.5 530.8,548.5 533.6,548.5 536.4,548.5 539.1,547.5 541.9,547.5 543.4,565.5 546.4,544.5 549.1,545.5 551.8,546.5 554.4,548.5 557.1,549.5 559.8,550.5 562.4,551.5 565.0,550.5 567.6,551.5 570.3,550.5 572.9,551.5 575.5,551.5 578.1,550.5 580.7,551.5 583.4,551.5 586.0,552.5 588.6,551.5 591.2,552.5 594.2,552.5 597.2,512.5 600.2,471.5 603.2,442.5 606.2,413.5 608.9,412.5 611.7,413.5 614.4,412.5 617.1,411.5 619.8,412.5 622.5,412.5 625.3,411.5 628.0,411.5 630.5,412.5 633.1,411.5 635.6,412.5 638.1,412.5 640.7,411.5 643.2,412.5 645.8,412.5 648.3,413.5 650.8,413.5 653.4,412.5 655.9,413.5 658.5,413.5 661.0,413.5 663.6,415.5 666.1,414.5 668.7,415.5 671.2,415.5 673.8,416.5 676.4,416.5 678.9,416.5 681.5,417.5 684.0,418.5 686.6,418.5 689.1,418.5 691.7,419.5 694.7,421.5 697.7,423.5 700.7,425.5 703.7,428.5 706.7,431.5 709.7,433.5 712.6,435.5 715.6,438.5 718.2,440.5 720.7,440.5 723.3,441.5 725.9,442.5 728.5,444.5 731.0,444.5 733.6,445.5 736.3,445.5 738.9,446.5 741.6,445.5 744.2,446.5 746.9,446.5 749.5,446.5 752.2,447.5 754.8,447.5 757.5,447.5 760.2,447.5 762.9,447.5 765.7,448.5 768.4,447.5 771.1,448.5 773.8,448.5 776.5,448.5 779.2,448.5 782.0,449.5 784.7,449.5 787.4,449.5 789.9,448.5 792.4,448.5 794.9,448.5 797.4,448.5 799.9,448.5 802.4,448.5 804.9,448.5 807.4,448.5 809.9,449.5 812.4,448.5 814.9,448.5 817.4,448.5 819.9,448.5 822.4,449.5 825.0,448.5 827.5,447.5 830.0,448.5 832.5,448.5 835.0,448.5 837.5,448.5 840.0,448.5 842.5,448.5 845.0,448.5 847.5,448.5 850.0,448.5 852.5,447.5 855.0,448.5 857.5,448.5 860.0,448.5 862.6,447.5 865.3,448.5 867.9,448.5 870.5,448.5 873.2,448.5 875.8,448.5 878.4,448.5 881.1,448.5 883.7,447.5 886.4,447.5 889.0,448.5 891.6,447.5 894.3,448.5 896.9,447.5 899.5,448.5 902.2,448.5 904.8,448.5 907.8,448.5 910.8,450.5 913.8,451.5 916.3,450.5 918.9,450.5 921.4,450.5 924.0,451.5 926.5,451.5 929.0,450.5 931.6,450.5 934.1,450.5 936.7,451.5 939.2,450.5 941.7,450.5 944.3,449.5 946.8,449.5 949.4,450.5 951.9,450.5 954.4,449.5 957.0,449.5 959.5,450.5 962.1,449.5 964.6,450.5 967.2,449.5 969.7,450.5 972.3,449.5 974.8,450.5 977.4,450.5 980.0,449.5 982.5,451.5 985.1,450.5 987.7,450.5 990.2,450.5 992.8,450.5 995.3,450.5 997.9,450.5 1000.5,450.5 1003.0,450.5 1005.6,451.5 1008.2,450.5 1010.7,451.5 1013.3,450.5 1015.8,450.5 1018.4,451.5 1021.0,450.5 1023.5,450.5 1026.1,450.5 1028.7,450.5 1031.2,451.5 1033.8,450.5 1036.3,450.5 1038.9,450.5 1041.5,449.5 1044.0,450.5 1046.6,450.5 1049.2,449.5 1051.7,449.5 1054.3,449.5 1056.8,449.5 1059.4,449.5 1061.9,450.5 1064.5,450.5 1067.0,449.5 1069.5,450.5 1072.1,450.5 1074.6,449.5 1077.2,449.5 1079.7,450.5 1082.2,450.5 1084.8,449.5 1087.3,449.5 1089.8,450.5 1092.4,449.5 1094.9,449.5 1097.5,449.5 1100.0,450.5 1102.5,449.5 1105.0,449.5 1107.5,449.5 1110.1,449.5 1112.6,450.5 1115.1,449.5 1117.6,449.5 1120.1,449.5 1122.6,450.5 1125.2,450.5 1127.7,449.5 1130.2,449.5 1132.7,450.5 1135.2,449.5 1137.7,450.5 1140.3,449.5 1142.8,450.5 1145.3,450.5 1147.8,450.5 1150.3,450.5 1152.8,450.5 1155.3,450.5 1157.9,449.5 1160.4,450.5 1162.9,450.5 1165.4,449.5 1167.9,449.5 1170.4,449.5 1173.0,449.5 1175.5,449.5 1178.0,449.5 1180.5,450.5 1183.0,449.5 1185.5,449.5 1188.1,450.5 1190.6,449.5 1193.1,450.5 1195.6,449.5 1198.1,449.5 1200.6,449.5 1203.1,449.5 1205.7,450.5 1208.2,450.5 1210.7,449.5 1213.2,449.5 1215.7,449.5 1218.2,449.5 1220.8,449.5 1223.3,449.5 1225.8,450.5 1228.3,449.5 1230.8,450.5 1233.3,450.5 1235.9,449.5 1238.4,449.5 1240.9,450.5 1243.4,449.5 1245.9,449.5 1248.4,450.5 1250.9,450.5 1253.5,450.5 1256.0,450.5 1258.5,450.5 1261.0,449.5 1263.5,450.5 1266.0,450.5 1268.6,450.5 1271.1,449.5 1273.6,450.5 1276.1,450.5 1278.6,450.5 1281.1,450.5 1283.7,450.5 1286.2,450.5 1288.7,450.5 1291.2,450.5 1294.2,443.5 1297.2,435.5 1301.4,219.5"/>
<polyline fill="none" stroke="#3a3aa8" stroke-width="1.15" stroke-linejoin="round" points="1301.4,219.1 1304.0,219.1 1306.6,219.1 1309.2,219.1 1311.8,219.1 1314.4,219.1 1317.0,219.1 1319.6,219.1 1322.2,219.1 1324.8,219.1 1327.4,219.1 1330.0,219.1 1332.6,219.1 1335.2,219.1 1337.8,219.1 1340.4,219.1 1343.0,219.1"/>
<polyline fill="none" stroke="#e8e830" stroke-width="1.15" stroke-linejoin="round" points="390.0,382.0 391.0,381.5 393.7,382.5 396.4,382.5 399.1,383.5 401.8,383.5 404.4,383.5 407.1,384.5 409.8,384.5 412.5,384.5 415.2,384.5 417.9,384.5 420.9,386.5 423.9,387.5 426.9,389.5 429.5,389.5 432.0,390.5 434.6,390.5 437.1,390.5 439.7,390.5 442.2,391.5 444.8,390.5 447.4,391.5 449.9,391.5 452.5,390.5 455.0,391.5 457.6,391.5 460.1,391.5 462.7,392.5 465.3,392.5 468.0,392.5 470.6,392.5 473.2,392.5 475.9,393.5 478.5,392.5 481.1,393.5 483.8,393.5 486.4,394.5 489.1,394.5 491.7,394.5 494.3,394.5 497.0,394.5 499.6,394.5 502.2,394.5 504.9,394.5 507.5,395.5 510.0,395.5 512.6,396.5 515.1,395.5 517.6,396.5 520.2,396.5 522.7,396.5 525.2,396.5 527.7,396.5 530.3,395.5 532.8,396.5 535.3,396.5 537.9,396.5 540.4,396.5 543.4,403.5 546.4,393.5 549.1,394.5 551.8,395.5 554.4,396.5 557.1,397.5 559.8,398.5 562.4,398.5 565.0,398.5 567.6,397.5 570.3,398.5 572.9,397.5 575.5,398.5 578.1,397.5 580.7,397.5 583.4,398.5 586.0,398.5 588.6,397.5 591.2,398.5 593.7,397.5 596.2,397.5 598.7,395.5 601.2,395.5 603.7,394.5 606.2,393.5 609.0,393.5 611.7,393.5 614.5,393.5 617.2,393.5 620.0,393.5 622.6,394.5 625.1,394.5 627.7,395.5 630.2,395.5 632.8,396.5 635.3,396.5 637.9,396.5 640.5,398.5 643.0,398.5 645.6,400.5 648.2,401.5 650.8,403.5 653.3,404.5 655.9,405.5 658.5,407.5 661.0,409.5 663.6,411.5 666.1,412.5 668.7,414.5 671.2,416.5 673.8,417.5 676.4,419.5 678.9,422.5 681.5,425.5 684.0,426.5 686.6,429.5 689.1,431.5 691.7,434.5 694.7,439.5 697.7,444.5 700.7,450.5 703.7,456.5 706.7,462.5 709.7,468.5 712.7,469.5 715.7,472.5 718.6,472.5 721.6,474.5 724.6,476.5 727.6,477.5 730.6,477.5 733.5,479.5 736.5,479.5 739.5,480.5 742.2,480.5 744.9,481.5 747.7,481.5 750.4,480.5 753.1,482.5 755.8,481.5 758.5,482.5 761.2,482.5 764.0,482.5 766.7,482.5 769.4,482.5 772.0,482.5 774.5,482.5 777.1,483.5 779.7,483.5 782.3,483.5 784.8,483.5 787.4,484.5 790.1,483.5 792.8,483.5 795.5,484.5 798.2,483.5 800.9,483.5 803.7,483.5 806.4,483.5 809.1,483.5 811.8,482.5 814.5,482.5 817.2,482.5 819.7,482.5 822.2,482.5 824.8,482.5 827.3,482.5 829.8,482.5 832.3,483.5 834.8,482.5 837.3,482.5 839.9,482.5 842.4,482.5 844.9,482.5 847.4,483.5 849.9,482.5 852.4,482.5 855.0,483.5 857.5,482.5 860.0,482.5 862.6,483.5 865.3,483.5 867.9,483.5 870.5,482.5 873.2,482.5 875.8,482.5 878.4,483.5 881.1,482.5 883.7,482.5 886.4,482.5 889.0,483.5 891.6,482.5 894.3,482.5 896.9,483.5 899.5,482.5 902.2,482.5 904.8,482.5 907.8,483.5 910.8,485.5 913.8,486.5 916.3,486.5 918.8,486.5 921.3,486.5 923.9,486.5 926.4,486.5 928.9,486.5 931.4,486.5 933.9,485.5 936.4,485.5 939.0,486.5 941.5,486.5 944.0,485.5 946.5,485.5 949.0,486.5 951.5,485.5 954.1,486.5 956.6,486.5 959.1,485.5 961.6,486.5 964.1,485.5 966.6,485.5 969.1,486.5 971.7,485.5 974.2,485.5 976.7,486.5 979.2,485.5 981.7,486.5 984.2,485.5 986.8,486.5 989.3,485.5 991.8,486.5 994.3,485.5 996.8,486.5 999.3,485.5 1001.9,485.5 1004.4,485.5 1006.9,485.5 1009.4,485.5 1012.0,485.5 1014.5,485.5 1017.1,486.5 1019.7,486.5 1022.3,486.5 1024.8,487.5 1027.4,487.5 1030.3,485.5 1033.3,485.5 1035.9,485.5 1038.4,485.5 1041.0,485.5 1043.6,484.5 1046.1,485.5 1048.7,485.5 1051.3,485.5 1053.8,485.5 1056.4,485.5 1059.0,485.5 1061.5,485.5 1064.1,485.5 1066.7,485.5 1069.2,485.5 1071.8,485.5 1074.3,485.5 1076.9,485.5 1079.5,486.5 1082.0,485.5 1084.6,485.5 1087.2,485.5 1089.7,485.5 1092.3,485.5 1094.9,485.5 1097.4,485.5 1100.0,485.5 1102.5,486.5 1105.0,485.5 1107.5,485.5 1110.0,485.5 1112.5,486.5 1115.1,486.5 1117.6,485.5 1120.1,485.5 1122.6,486.5 1125.1,485.5 1127.6,486.5 1130.1,485.5 1132.6,485.5 1135.1,486.5 1137.6,486.5 1140.1,486.5 1142.7,486.5 1145.2,486.5 1147.7,485.5 1150.2,486.5 1152.7,485.5 1155.2,485.5 1157.7,485.5 1160.2,485.5 1162.7,485.5 1165.2,485.5 1167.8,485.5 1170.3,486.5 1172.8,485.5 1175.3,485.5 1177.8,486.5 1180.3,485.5 1182.8,486.5 1185.3,485.5 1187.8,485.5 1190.3,485.5 1192.8,485.5 1195.4,486.5 1197.9,485.5 1200.4,485.5 1202.9,485.5 1205.4,485.5 1207.9,485.5 1210.4,485.5 1212.9,485.5 1215.4,486.5 1217.9,485.5 1220.4,485.5 1223.0,485.5 1225.5,485.5 1228.0,485.5 1230.5,485.5 1233.0,485.5 1235.5,485.5 1238.0,486.5 1240.5,486.5 1243.0,486.5 1245.5,486.5 1248.1,486.5 1250.6,485.5 1253.1,486.5 1255.6,485.5 1258.1,486.5 1260.6,485.5 1263.1,486.5 1265.6,486.5 1268.1,486.5 1270.6,486.5 1273.1,486.5 1275.7,485.5 1278.2,486.5 1280.7,486.5 1283.2,485.5 1285.7,486.5 1288.2,485.5 1292.7,480.5 1297.2,435.5 1299.0,400.5"/>
<polyline fill="none" stroke="#e8e830" stroke-width="1.15" stroke-linejoin="round" points="1302.0,226.4 1304.6,226.4 1307.1,226.4 1309.7,226.4 1312.2,226.4 1314.8,226.4 1317.4,226.4 1319.9,226.4 1322.5,226.4 1325.1,226.4 1327.6,226.4 1330.2,226.4 1332.8,226.4 1335.3,226.4 1337.9,226.4 1340.4,226.4 1343.0,226.4"/>
<polyline fill="none" stroke="#30d0e8" stroke-width="1.15" stroke-linejoin="round" points="523.0,129.0 525.8,145.5 528.5,162.5 531.3,179.5 534.2,193.5 537.1,206.5 540.0,220.5 543.0,232.5 545.9,244.5 549.4,265.5 552.0,259.5 554.7,252.5 557.6,240.5 560.5,227.5 563.4,214.5 566.3,197.5 569.3,179.5 573.7,150.5 577.5,129.5 578.0,126.5 580.8,125.5 583.5,126.5 586.2,126.5 589.0,126.5 589.5,129.5 591.2,154.5 593.8,172.5 596.5,190.5 599.1,208.5 601.8,226.5 604.4,244.5 608.0,279.5 611.7,314.5 615.4,333.5 619.0,352.5 622.5,369.5 626.0,387.5 629.0,397.5 632.0,407.5 635.0,409.5 637.9,411.5 642.4,408.5 645.4,407.5 648.4,407.5 650.9,407.5 653.4,407.5 655.9,407.5 658.9,410.5 661.8,413.5 664.8,416.5 667.3,418.5 669.8,420.5 672.3,423.5 674.8,424.5 677.3,427.5 679.8,429.5 682.8,432.5 685.8,435.5 688.7,438.5 691.7,441.5 694.7,444.5 697.7,446.5 700.7,449.5 703.7,451.5 706.7,454.5 709.7,452.5 712.7,451.5 715.6,451.5 718.6,450.5 721.6,449.5 724.6,448.5 727.6,447.5 730.6,446.5 733.6,446.5 736.5,447.5 739.5,447.5 742.5,450.5 745.5,453.5 748.5,456.5 751.0,457.5 753.5,460.5 756.0,461.5 758.5,463.5 761.0,465.5 763.5,467.5 766.1,468.5 768.6,468.5 771.2,469.5 773.7,470.5 776.3,471.5 778.8,472.5 781.4,473.5 784.4,473.5 787.4,474.5 790.3,474.5 793.3,475.5 796.3,476.5 798.9,476.5 801.5,475.5 804.1,475.5 806.8,474.5 809.4,474.5 812.0,474.5 814.6,473.5 817.2,473.5 819.8,473.5 822.3,474.5 824.9,475.5 827.5,475.5 830.1,475.5 832.6,476.5 835.2,476.5 838.0,477.5 840.7,477.5 843.5,477.5 846.2,477.5 849.0,478.5 851.7,478.5 854.5,478.5 857.2,480.5 860.0,479.5 863.0,480.5 866.0,481.5 869.0,482.5 872.0,482.5 874.6,483.5 877.1,484.5 879.7,485.5 882.2,485.5 884.8,486.5 887.3,486.5 889.9,488.5 892.6,488.5 895.3,488.5 898.1,488.5 900.8,487.5 903.5,487.5 906.2,487.5 908.9,487.5 911.6,487.5 914.4,487.5 917.1,487.5 919.8,487.5 922.4,487.5 925.0,486.5 927.6,487.5 930.2,487.5 932.8,487.5 935.4,486.5 938.0,487.5 940.6,487.5 943.2,487.5 945.8,487.5 948.4,487.5 950.9,487.5 953.5,487.5 956.1,487.5 958.7,487.5 961.3,487.5 963.9,487.5 966.5,488.5 969.1,487.5 971.7,488.5 974.3,488.5 976.9,487.5 979.5,488.5 982.2,487.5 984.8,488.5 987.5,489.5 990.2,489.5 992.8,488.5 995.5,489.5 998.2,489.5 1000.8,489.5 1003.5,490.5 1006.1,490.5 1008.7,490.5 1011.3,489.5 1014.0,489.5 1016.6,489.5 1019.2,489.5 1021.8,489.5 1024.4,489.5 1027.4,488.5 1030.3,487.5 1033.3,485.5 1035.9,485.5 1038.4,486.5 1041.0,485.5 1043.6,486.5 1046.1,485.5 1048.7,485.5 1051.3,485.5 1053.8,485.5 1056.4,485.5 1059.0,486.5 1061.5,486.5 1064.1,485.5 1066.7,485.5 1069.2,486.5 1071.8,485.5 1074.3,485.5 1076.9,485.5 1079.5,486.5 1082.0,485.5 1084.6,485.5 1087.2,485.5 1089.7,486.5 1092.3,486.5 1094.9,485.5 1097.4,485.5 1100.0,485.5 1102.5,485.5 1105.1,485.5 1107.6,485.5 1110.2,486.5 1112.7,486.5 1115.3,485.5 1117.8,485.5 1120.3,486.5 1122.9,486.5 1125.4,486.5 1128.0,486.5 1130.5,486.5 1133.1,486.5 1135.6,486.5 1138.1,486.5 1140.7,486.5 1143.2,486.5 1145.8,486.5 1148.3,486.5 1150.9,487.5 1153.4,486.5 1155.9,486.5 1158.5,486.5 1161.0,486.5 1163.6,486.5 1166.1,486.5 1168.6,487.5 1171.2,486.5 1173.7,487.5 1176.3,487.5 1178.8,487.5 1181.4,487.5 1183.9,487.5 1186.4,487.5 1189.0,487.5 1191.5,487.5 1194.1,487.5 1196.6,487.5 1199.2,487.5 1201.7,488.5 1204.2,487.5 1206.8,487.5 1209.3,488.5 1211.9,487.5 1214.4,487.5 1217.0,488.5 1219.5,488.5 1222.5,488.5 1225.5,488.5 1228.4,488.5 1231.4,488.5 1234.4,489.5 1237.0,489.5 1239.7,489.5 1242.3,488.5 1245.0,489.5 1247.6,488.5 1250.2,488.5 1252.9,488.5 1255.5,488.5 1258.2,487.5 1260.8,487.5 1263.5,487.5 1266.1,487.5 1268.7,487.5 1271.4,486.5 1274.0,487.5 1276.7,487.5 1279.3,487.5 1282.2,490.5 1285.2,493.5 1289.7,477.5 1292.2,463.5 1294.7,449.5 1297.2,435.5 1299.7,420.5 1302.2,405.5 1304.8,390.5 1307.3,375.5 1309.8,360.5 1312.9,341.5 1316.0,322.5 1319.1,330.5 1322.2,338.5 1325.3,346.5 1327.9,345.5 1330.5,343.5 1334.7,335.5 1337.8,312.5 1341.0,289.5 1342.5,247.5"/>
<polyline fill="none" stroke="#30d0e8" stroke-width="1.15" stroke-linejoin="round" points="468.4,129.0 472.8,143.0 475.7,131.4 478.6,129.0 481.0,137.0 482.0,129.0"/>
<polyline fill="none" stroke="#e01818" stroke-width="1.15" stroke-linejoin="round" points="390.0,435.0 392.5,435.5 395.0,435.5 397.5,434.5 400.1,434.5 402.6,435.5 405.1,435.5 407.6,435.5 410.1,434.5 412.6,435.5 415.1,435.5 417.7,435.5 420.2,434.5 422.7,434.5 425.2,434.5 427.7,435.5 430.2,435.5 432.8,435.5 435.3,435.5 437.8,434.5 440.3,434.5 442.8,434.5 445.3,434.5 447.8,434.5 450.4,434.5 452.9,434.5 455.4,435.5 457.9,435.5 460.4,435.5 462.9,434.5 465.5,434.5 468.0,434.5 470.5,434.5 473.0,435.5 475.5,435.5 478.0,435.5 480.5,434.5 483.1,435.5 485.6,435.5 488.1,435.5 490.6,435.5 493.1,435.5 495.6,435.5 498.1,434.5 500.7,435.5 503.2,435.5 505.7,434.5 508.2,435.5 510.7,435.5 513.2,434.5 515.8,435.5 518.3,434.5 520.8,435.5 523.3,435.5 525.8,435.5 528.3,434.5 530.8,435.5 533.4,435.5 535.9,434.5 538.4,435.5 540.9,435.5 543.4,435.5 545.9,434.5 548.4,434.5 551.0,434.5 553.5,435.5 556.0,434.5 558.5,435.5 561.0,434.5 563.5,435.5 566.1,434.5 568.6,435.5 571.1,435.5 573.6,435.5 576.1,435.5 578.6,435.5 581.1,435.5 583.7,434.5 586.2,434.5 588.7,435.5 591.2,435.5"/>
<polyline fill="none" stroke="#e01818" stroke-width="1.15" stroke-linejoin="round" points="591.2,435.0 594.2,426.5 597.2,417.5 600.2,404.5 603.2,390.5 606.2,380.5 609.2,369.5 612.1,364.5 615.1,357.5 618.0,352.5 620.0,346.5 622.7,342.5 625.3,339.5 628.0,335.5 630.6,332.5 633.3,328.5 635.9,325.5 638.6,320.5 641.2,317.5 643.9,314.5 646.5,310.5 649.2,306.5 651.8,304.5 654.4,302.5 657.0,299.5 659.6,296.5 662.2,294.5 664.8,291.5 667.4,289.5 670.0,287.5 672.6,284.5 675.1,280.5 677.6,276.5 680.1,272.5 682.7,268.5 685.2,263.5 687.7,259.5 690.2,255.5 692.7,249.5 695.2,245.5 697.7,239.5 700.2,233.5 702.7,228.5 705.2,223.5 707.7,217.5 710.6,210.5 713.5,202.5 716.5,196.5 719.4,188.5 722.3,182.5 725.2,177.5 728.2,172.5 731.1,166.5 734.0,163.5 737.0,160.5 739.9,157.5 742.8,154.5 745.7,152.5 748.6,150.5 751.6,147.5 754.5,145.5 757.4,143.5 761.0,142.5 764.7,143.5 768.4,147.5 772.0,153.5 775.7,167.5 779.4,181.5 782.3,181.5 785.2,183.5 787.8,181.5 790.3,180.5 792.9,179.5 795.4,178.5 798.1,176.5 800.7,176.5 803.4,175.5 806.1,174.5 808.7,173.5 811.4,172.5 814.0,172.5 816.7,170.5 819.4,169.5 822.0,168.5 824.7,167.5 827.2,167.5 829.7,166.5 832.3,165.5 834.8,164.5 837.3,164.5 839.8,164.5 842.4,163.5 844.9,162.5 847.4,161.5 849.9,161.5 852.4,160.5 855.0,160.5 857.5,159.5 860.0,159.5 862.6,158.5 865.1,158.5 867.7,158.5 870.2,157.5 872.8,156.5 875.4,156.5 877.9,157.5 880.5,156.5 883.0,155.5 885.6,155.5 888.1,154.5 890.7,154.5 893.2,153.5 895.8,153.5 898.4,152.5 900.9,151.5 903.9,156.5 906.8,170.5 909.7,185.5 912.6,190.5 915.5,190.5 918.5,190.5 921.4,191.5 924.3,189.5 927.3,188.5 931.6,189.5 936.0,186.5 938.6,186.5 941.3,186.5 943.9,186.5 946.5,186.5 949.1,185.5 951.8,185.5 954.4,184.5 957.0,184.5 959.7,184.5 962.3,184.5 965.2,184.5 968.2,183.5 971.1,184.5 973.7,183.5 976.2,183.5 978.8,182.5 981.4,182.5 983.9,182.5 986.5,181.5 989.0,181.5 991.6,181.5 994.1,180.5 996.7,180.5 999.2,179.5 1001.8,179.5 1004.4,178.5 1006.9,178.5 1009.5,177.5 1012.0,177.5 1014.6,176.5 1017.2,176.5 1019.8,175.5 1022.4,175.5 1025.0,175.5 1027.6,174.5 1030.2,174.5 1032.8,174.5 1035.4,173.5 1038.1,173.5 1040.7,172.5 1043.4,173.5 1046.1,172.5 1048.7,171.5 1051.4,171.5 1054.0,171.5 1056.7,170.5 1059.4,170.5 1062.0,169.5 1064.7,169.5 1067.2,169.5 1069.7,168.5 1072.3,167.5 1074.8,168.5 1077.3,167.5 1079.8,166.5 1082.3,167.5 1084.9,167.5 1087.4,166.5 1089.9,166.5 1092.4,165.5 1095.0,165.5 1097.5,165.5 1100.0,164.5 1102.5,164.5 1105.0,164.5 1107.5,164.5 1110.0,164.5 1112.5,164.5 1115.0,164.5 1117.5,164.5 1120.1,164.5 1122.6,164.5 1125.1,163.5 1127.6,164.5 1130.1,164.5 1132.6,164.5 1135.1,164.5 1137.7,163.5 1140.3,163.5 1142.9,163.5 1145.5,163.5 1148.1,163.5 1150.7,162.5 1153.3,162.5 1155.9,161.5 1158.5,161.5 1161.2,161.5 1163.8,161.5 1166.5,160.5 1169.1,160.5 1171.8,160.5 1174.4,160.5 1177.1,159.5 1179.7,159.5 1182.4,159.5 1185.0,159.5 1187.7,159.5 1190.4,159.5 1193.0,159.5 1195.7,158.5 1198.4,158.5 1201.0,158.5 1203.7,158.5 1206.3,158.5 1209.0,158.5 1211.7,157.5 1214.3,157.5 1217.0,157.5 1219.7,157.5 1222.3,157.5 1225.0,157.5 1227.6,157.5 1230.3,157.5 1232.9,157.5 1235.6,156.5 1238.2,156.5 1240.9,156.5 1243.5,156.5 1246.2,156.5 1248.9,155.5 1251.5,155.5 1254.2,155.5 1256.8,155.5 1259.5,155.5 1262.1,154.5 1264.8,154.5 1267.4,155.5 1270.1,154.5 1272.7,154.5 1275.4,154.5 1279.1,153.5 1282.7,153.5 1285.3,154.5 1287.8,154.5 1290.4,153.5 1293.0,154.5 1295.9,185.5 1298.8,214.5 1301.8,244.5 1304.6,246.5 1307.7,244.5 1310.8,244.5 1313.9,243.5 1317.0,243.5 1320.7,242.5 1324.3,241.5 1327.9,243.5 1331.6,243.5 1334.4,244.5 1337.3,246.5 1340.2,247.5 1343.0,249.5"/>
<polyline fill="none" stroke="#38d838" stroke-width="1.15" stroke-linejoin="round" points="390.0,284.0 391.5,283.5 393.8,268.5 396.4,267.5 399.0,266.5 402.6,271.5 406.3,275.5 410.0,279.5 414.3,282.5 418.0,283.5 421.6,283.5 424.2,283.5 426.8,283.5 429.4,283.5 432.0,283.5 434.5,283.5 437.1,283.5 439.7,283.5 442.3,282.5 444.9,283.5 447.5,283.5 450.1,282.5 452.7,282.5 455.2,283.5 457.8,283.5 460.4,283.5 463.0,283.5 465.6,282.5 468.2,283.5 470.8,282.5 473.4,283.5 476.0,283.5 478.5,283.5 481.1,282.5 483.7,283.5 486.3,282.5 488.9,283.5 491.8,273.5 496.2,189.5 499.0,188.5 501.5,210.5 505.0,222.5 507.9,226.5 510.8,230.5 515.2,249.5 519.6,267.5 522.2,270.5 524.8,274.5 527.4,273.5 530.0,274.5 532.5,273.5 535.1,274.5 537.7,274.5 540.3,274.5 542.9,274.5 545.5,274.5 548.0,273.5 550.6,274.5 553.2,274.5 556.9,270.5 560.5,267.5 563.5,264.5 566.4,261.5 569.0,252.5 571.6,244.5 575.0,208.5 578.0,168.5 581.0,149.5 585.4,146.5 588.3,131.5 590.0,128.5 592.5,128.5 595.0,127.5 597.5,128.5 600.0,128.5 602.5,127.5 605.0,128.5 607.5,127.5 610.0,127.5 612.5,127.5 615.0,127.5 617.5,128.5 620.0,128.5 622.5,127.5 625.0,127.5 627.5,128.5 630.0,127.5 632.5,127.5 635.0,127.5 637.5,127.5 640.0,127.5 642.5,127.5 645.0,127.5 647.5,128.5 650.0,127.5 652.5,128.5 655.0,127.5 657.5,127.5 660.0,127.5 662.5,127.5 665.0,127.5 667.5,127.5 670.0,127.5 672.5,127.5 675.0,127.5 677.5,127.5 680.0,127.5 682.5,127.5 685.0,127.5 687.5,127.5 690.0,127.5 692.5,127.5 695.0,127.5 697.5,127.5 700.0,127.5 702.5,127.5 705.0,127.5 707.5,127.5 710.0,127.5 712.5,127.5 715.0,127.5 717.5,127.5 720.0,127.5 722.5,127.5 725.0,127.5 727.5,127.5 730.0,127.5 732.6,130.5 735.5,130.5 738.4,130.5 741.3,130.5 745.0,127.5 747.8,127.5 750.5,127.5 753.2,127.5 756.0,127.5 759.0,130.5 761.5,131.5 764.0,132.5 766.5,133.5 769.0,134.5 772.0,144.5 774.9,154.5 777.9,165.5 780.8,158.5 783.8,151.5 786.7,144.5 789.6,139.5 792.5,135.5 795.4,131.5 800.0,130.5 802.5,130.5 805.0,130.5 807.5,130.5 810.0,130.5 812.5,128.5 815.0,127.5 817.5,127.5 820.0,127.5 822.5,127.5 825.0,127.5 827.5,127.5 830.0,127.5 832.5,127.5 835.0,127.5 837.5,127.5 840.0,127.5 842.5,127.5 845.0,127.5 847.5,127.5 850.0,127.5 854.0,130.5 857.0,130.5 860.0,130.5 862.5,130.5 865.0,130.5 867.5,130.5 870.0,130.5 872.5,130.5 875.0,130.5 877.5,130.5 880.1,131.5 882.7,131.5 885.3,132.5 887.9,132.5 890.6,133.5 893.2,133.5 895.8,134.5 898.4,134.5 901.0,135.5 903.9,132.5 907.1,139.5 910.3,147.5 913.0,143.5 915.6,140.5 919.2,139.5 922.9,138.5 925.8,135.5 928.7,133.5 931.6,130.5 934.4,130.5 937.2,130.5 940.0,130.5 944.0,127.5 946.7,128.5 949.3,129.5 952.0,130.5 954.7,130.5 957.3,130.5 960.0,130.5 962.5,129.5 965.0,127.5 967.5,129.5 970.0,130.5 972.7,130.5 975.4,130.5 978.2,130.5 980.9,130.5 983.6,130.5 986.3,130.5 989.1,130.5 991.8,130.5 994.5,130.5 997.5,131.5 1000.4,132.5 1002.9,132.5 1005.5,133.5 1008.0,133.5 1010.6,133.5 1013.1,133.5 1015.7,133.5 1018.2,133.5 1020.8,133.5 1023.4,133.5 1025.9,133.5 1028.5,133.5 1031.0,134.5 1033.6,134.5 1036.2,134.5 1038.7,134.5 1041.3,135.5 1044.9,132.5 1048.6,131.5 1051.2,132.5 1053.9,133.5 1056.5,135.5 1059.2,136.5 1061.8,137.5 1064.3,136.5 1066.9,136.5 1069.5,136.5 1072.0,136.5 1074.5,136.5 1077.1,135.5 1079.7,135.5 1082.2,135.5 1084.7,135.5 1087.3,136.5 1089.8,136.5 1092.4,136.5 1094.9,137.5 1097.5,136.5 1100.0,137.5 1102.9,137.5 1105.8,138.5 1108.8,138.5 1111.7,139.5 1114.6,139.5 1117.5,138.5 1120.5,138.5 1123.4,137.5 1126.3,138.5 1129.2,139.5 1132.2,140.5 1135.1,140.5 1138.0,141.5 1141.0,140.5 1143.9,138.5 1146.8,138.5 1149.8,138.5 1152.7,138.5 1155.6,138.5 1159.2,140.5 1162.9,143.5 1165.8,140.5 1168.7,138.5 1171.6,136.5 1174.2,138.5 1176.9,141.5 1179.5,143.5 1182.2,145.5 1184.8,148.5 1187.7,145.5 1190.7,142.5 1193.6,140.5 1196.3,141.5 1198.9,143.5 1201.6,144.5 1204.3,145.5 1206.9,147.5 1209.6,148.5 1213.3,147.5 1217.0,144.5 1219.9,145.5 1222.8,145.5 1225.8,146.5 1228.7,146.5 1231.6,147.5 1234.5,148.5 1237.4,148.5 1240.3,147.5 1243.3,146.5 1246.2,144.5 1248.8,144.5 1251.5,145.5 1254.1,145.5 1256.8,145.5 1259.4,146.5 1262.0,144.5 1264.6,143.5 1267.3,142.5 1269.9,141.5 1272.5,141.5 1275.4,141.5 1278.3,141.5 1281.3,142.5 1284.2,143.5 1288.6,148.5 1291.5,244.5 1294.4,352.5 1296.0,450.5 1298.7,577.5 1301.3,577.5 1304.0,577.5 1306.6,577.5 1309.3,577.5 1311.9,577.5 1314.5,577.5 1317.2,577.5 1319.8,577.5 1322.4,577.5 1325.1,577.5 1327.7,577.5 1330.4,577.5 1333.0,577.5 1336.0,576.5 1339.0,576.5 1342.0,576.5"/>
<line x1="390" y1="436.5" x2="1343" y2="436.5" stroke="#fff" stroke-width="1"/>
<line x1="590.5" y1="129" x2="590.5" y2="580" stroke="#fff" stroke-width="1"/>
</svg>
 <rect x="244" y="614" width="1120" height="1" fill="#000"/>
<rect x="244" y="615" width="1120" height="67" fill="#a0a0a0"/>
<rect x="655" y="615" width="214" height="67" fill="#fff"/>
<svg x="244" y="615" width="1120" height="67" viewBox="244 615 1120 67" overflow="hidden">
<polyline fill="none" stroke="#a8a020" stroke-width="1" points="260.3,646.6 262.4,646.5 264.5,646.5 266.6,646.5 268.7,646.5 270.8,646.5 272.9,646.5 275.0,646.5 277.2,646.5 279.3,647.5 281.4,647.5 283.5,648.5 285.6,649.5 287.7,650.5 289.8,651.5 291.9,652.5 295.4,633.5 297.5,652.5 300.7,652.5 303.0,652.5 305.2,653.5 307.5,653.5 309.7,653.5 312.0,654.5 314.2,654.5 316.5,654.5 318.7,654.5 320.9,654.5 323.1,654.5 325.3,653.5 327.5,654.5 329.7,653.5 332.3,651.5 335.0,649.5 337.6,648.5 340.2,647.5 342.9,646.5 345.5,637.5 348.1,628.5 351.7,635.5 354.3,648.5 356.3,645.5 358.4,643.5 360.4,640.5 363.1,630.5 365.3,629.5 367.5,629.5 369.9,629.5 372.2,629.5 374.6,628.5 376.9,628.5 379.3,628.5 381.4,630.5 383.4,632.5 385.5,634.5 387.5,637.5 389.6,639.5 391.6,641.5 393.7,641.5 395.7,643.5 397.8,643.5 399.8,644.5 401.8,645.5 403.9,646.5 405.9,646.5 408.0,646.5 410.0,646.5 412.1,646.5 414.1,647.5 416.2,647.5 418.2,646.5 420.3,647.5 422.3,646.5 424.4,647.5 426.4,647.5 428.5,647.5 430.5,647.5 432.6,647.5 434.6,648.5 436.7,648.5 438.7,648.5 440.8,648.5 442.8,648.5 444.9,648.5 446.9,648.5 449.0,648.5 451.0,648.5 453.1,648.5 455.1,649.5 457.2,648.5 459.2,648.5 461.5,646.5 463.8,644.5 466.1,642.5 468.4,640.5 471.0,642.5 473.5,645.5 476.1,646.5 478.2,646.5 480.4,646.5 482.5,646.5 484.6,646.5 486.8,646.5 488.9,646.5 491.0,646.5 493.1,646.5 495.3,646.5 497.4,646.5 499.5,646.5 501.7,646.5 503.8,646.5 506.4,645.5 508.9,644.5 511.5,643.5 513.8,643.5 516.1,644.5 518.4,644.5 520.7,645.5 522.9,645.5 525.0,645.5 527.2,645.5 529.3,645.5 531.5,645.5 533.6,645.5 535.8,646.5 537.9,646.5 540.1,646.5 542.2,646.5 544.5,645.5 546.8,644.5 549.2,643.5 551.5,642.5 553.8,641.5 556.1,640.5 558.4,641.5 560.7,641.5 563.0,643.5 565.3,644.5 567.4,644.5 569.5,644.5 571.6,644.5 573.7,643.5 575.8,643.5 577.9,643.5 580.0,643.5 582.1,642.5 584.2,643.5 586.3,643.5 588.4,642.5 590.4,643.5 592.5,643.5 594.5,642.5 596.6,642.5 598.6,642.5 600.7,643.5 602.7,642.5 604.8,642.5 606.8,642.5 608.9,642.5 610.9,643.5 613.0,642.5 615.0,642.5 617.1,643.5 619.1,643.5 621.3,643.5 623.5,644.5 625.7,645.5 627.9,646.5 630.1,647.5 632.3,647.5 634.5,648.5 636.5,648.5 638.6,649.5 640.6,649.5 642.7,649.5 644.8,650.5 646.8,651.5 648.9,651.5 650.9,651.5 653.0,651.5 655.0,652.5"/>
<polyline fill="none" stroke="#20a8a8" stroke-width="1" points="260.3,637.0 263.8,637.5 267.3,641.5 270.0,640.5 272.6,641.5 274.6,641.5 276.7,643.5 278.7,644.5 281.4,644.5 284.0,644.5 286.2,646.5 288.4,648.5 291.0,651.5 293.7,654.5 296.3,660.5 298.4,657.5 300.4,655.5 302.5,652.5 305.1,652.5 307.7,653.5 309.8,653.5 312.0,653.5 314.1,652.5 316.3,653.5 318.4,653.5 320.6,652.5 322.7,652.5 324.9,653.5 327.0,652.5 329.6,654.5 332.3,656.5 335.0,653.5 337.6,650.5 340.2,646.5 342.9,644.5 345.5,646.5 348.1,648.5 350.8,634.5 353.4,621.5 356.0,632.5 359.6,652.5 363.1,648.5 365.1,645.5 367.2,644.5 369.2,641.5 371.4,632.5 373.6,623.5 375.5,614.5 377.6,613.5 379.7,613.5 381.9,613.5 384.0,613.5 386.1,614.5 388.2,613.5 390.4,614.5 392.5,614.5 394.6,614.5 396.7,620.5 398.7,627.5 400.8,634.5 402.9,641.5 404.9,648.5 407.0,655.5 409.1,654.5 411.3,655.5 413.4,654.5 415.6,654.5 417.8,655.5 419.9,655.5 422.1,655.5 424.2,655.5 426.4,655.5 428.5,655.5 430.6,655.5 432.8,655.5 434.9,655.5 437.1,655.5 439.2,654.5 441.4,654.5 443.6,654.5 445.7,654.5 447.9,653.5 450.0,653.5 452.0,654.5 454.1,656.5 456.1,657.5 458.4,657.5 460.8,658.5 463.1,659.5 465.4,659.5 467.4,657.5 469.5,656.5 471.5,654.5 473.6,653.5 475.6,652.5 477.7,650.5 479.7,650.5 481.8,651.5 483.8,650.5 485.9,651.5 487.9,651.5 490.0,652.5 492.0,652.5 494.1,652.5 496.1,652.5 498.2,653.5 500.2,653.5 502.2,654.5 504.3,653.5 506.3,654.5 508.4,655.5 510.6,653.5 512.7,653.5 514.9,651.5 517.0,649.5 519.2,648.5 521.3,648.5 523.4,649.5 525.5,648.5 527.6,648.5 529.7,648.5 531.7,648.5 533.8,648.5 535.9,649.5 538.0,648.5 540.1,648.5 542.2,648.5 544.8,650.5 547.4,653.5 550.0,655.5 552.1,653.5 554.3,651.5 556.4,650.5 558.6,649.5 560.7,647.5 563.0,646.5 565.3,645.5 567.6,643.5 569.9,642.5 572.0,642.5 574.0,642.5 576.1,642.5 578.1,642.5 580.2,641.5 582.2,641.5 584.3,641.5 586.3,641.5 588.4,641.5 590.5,641.5 592.6,641.5 594.7,641.5 596.8,640.5 598.9,641.5 600.9,641.5 603.0,641.5 605.1,642.5 607.2,642.5 609.3,641.5 611.4,642.5 613.6,642.5 615.8,643.5 618.0,643.5 620.2,644.5 622.4,644.5 624.6,645.5 626.8,645.5 629.1,638.5 631.4,630.5 633.7,622.5 636.0,614.5"/>
<polyline fill="none" stroke="#580070" stroke-width="1" points="260.3,652.8 262.3,652.5 264.4,651.5 266.4,651.5 268.5,652.5 270.5,652.5 272.6,653.5 274.8,653.5 277.0,653.5 279.2,652.5 281.4,652.5 284.9,647.5 287.5,646.5 290.1,644.5 293.7,648.5 297.0,648.5 300.7,644.5 303.0,644.5 305.3,644.5 307.5,643.5 309.8,643.5 312.1,643.5 314.3,644.5 316.5,645.5 318.7,644.5 320.9,642.5 323.3,641.5 325.6,641.5 328.0,641.5 331.5,645.5 333.5,647.5 335.6,649.5 337.6,650.5 340.2,651.5 342.9,651.5 346.4,644.5 349.0,673.5 351.6,663.5 354.3,654.5 356.9,648.5 360.4,654.5 362.6,662.5 364.8,669.5 365.7,680.5 367.9,680.5 370.2,681.5 372.4,680.5 374.7,681.5 376.9,680.5 379.1,677.5 381.3,676.5 383.4,674.5 385.6,673.5 387.8,672.5 390.0,670.5 392.2,668.5 394.3,667.5 396.5,665.5 398.6,664.5 400.8,662.5 402.8,662.5 404.9,662.5 406.9,662.5 408.9,662.5 411.0,663.5 413.0,663.5 415.1,663.5 417.1,663.5 419.2,663.5 421.2,663.5 423.3,663.5 425.3,664.5 427.4,664.5 429.4,663.5 431.5,664.5 433.5,664.5 435.6,664.5 437.6,664.5 439.7,663.5 441.7,664.5 443.8,664.5 445.8,662.5 447.9,662.5 449.9,661.5 452.0,660.5 454.0,659.5 457.7,659.5 460.0,657.5 462.3,655.5 464.3,657.5 466.4,660.5 468.4,662.5 470.6,662.5 472.7,661.5 474.9,661.5 477.0,660.5 479.2,660.5 481.2,660.5 483.3,660.5 485.4,660.5 487.4,660.5 489.4,661.5 491.5,661.5 493.6,660.5 495.6,661.5 497.6,660.5 499.7,661.5 501.8,661.5 503.8,661.5 506.0,662.5 508.1,663.5 510.3,663.5 512.4,664.5 514.6,665.5 516.7,664.5 518.8,663.5 521.0,664.5 523.1,663.5 525.2,663.5 527.3,662.5 529.5,663.5 531.6,662.5 533.7,662.5 535.8,661.5 538.0,662.5 540.1,661.5 542.2,661.5 544.8,661.5 547.4,661.5 550.0,660.5 552.5,662.5 555.1,664.5 557.6,665.5 559.6,666.5 561.7,665.5 563.7,665.5 565.8,665.5 567.8,665.5 569.9,665.5 571.9,665.5 574.0,665.5 576.0,665.5 578.1,665.5 580.1,665.5 582.2,665.5 584.2,664.5 586.3,664.5 588.3,665.5 590.4,664.5 592.4,665.5 594.5,665.5 596.5,665.5 598.6,664.5 600.6,664.5 602.7,664.5 604.7,664.5 606.8,665.5 608.8,664.5 610.9,664.5 612.9,664.5 615.0,664.5 617.0,664.5 619.1,664.5 621.1,664.5 623.2,663.5 625.2,664.5 628.3,657.5 630.4,654.5 632.4,652.5 634.5,651.5 636.5,650.5 638.6,650.5 640.6,649.5 642.7,648.5 644.8,648.5 646.8,647.5 648.9,647.5 650.9,646.5 653.0,647.5 655.0,646.5"/>
<polyline fill="none" stroke="#b01818" stroke-width="1" points="260.3,652.8 262.4,651.5 264.4,650.5 266.5,650.5 268.5,648.5 270.6,648.5 272.6,647.5 274.9,646.5 277.2,646.5 279.4,645.5 281.7,644.5 284.0,644.5 286.6,644.5 289.3,643.5 291.9,643.5 295.0,645.5 297.9,644.5 300.7,644.5 303.0,642.5 305.4,641.5 307.7,640.5 309.9,639.5 312.1,638.5 314.3,638.5 316.5,637.5 318.7,636.5 320.9,634.5 323.1,633.5 325.3,632.5 328.0,632.5 330.6,632.5 333.2,633.5 335.9,636.5 338.5,637.5 340.7,639.5 342.9,641.5 345.5,643.5 347.6,651.5 349.6,660.5 351.7,669.5 354.3,671.5 356.9,674.5 359.5,661.5 362.2,647.5 364.8,634.5 367.0,638.5 369.2,644.5 372.1,648.5 375.0,653.5 377.5,656.5 379.9,658.5 382.4,661.5 384.6,662.5 386.8,663.5 389.0,665.5 391.1,666.5 393.3,667.5 395.5,668.5 397.7,670.5 399.9,670.5 402.1,670.5 404.3,670.5 406.4,670.5 408.6,670.5 410.8,670.5 413.0,670.5 415.1,670.5 417.1,670.5 419.1,670.5 421.2,670.5 423.2,671.5 425.3,671.5 427.4,671.5 429.4,671.5 431.4,671.5 433.5,672.5 435.6,671.5 437.6,671.5 439.6,672.5 441.7,671.5 443.8,672.5 445.8,671.5 447.9,672.5 449.9,672.5 451.9,672.5 454.0,672.5 456.6,672.5 459.2,672.5 461.3,669.5 463.3,668.5 465.4,665.5 467.4,667.5 469.5,668.5 471.5,669.5 473.6,670.5 475.6,671.5 477.7,672.5 479.7,672.5 481.8,672.5 483.8,671.5 485.9,671.5 487.9,671.5 490.0,671.5 492.0,671.5 494.1,670.5 496.1,670.5 498.3,669.5 500.5,669.5 502.7,668.5 504.9,669.5 507.1,668.5 509.3,668.5 511.5,668.5 514.1,668.5 516.6,669.5 519.2,670.5 521.3,670.5 523.4,670.5 525.5,670.5 527.5,670.5 529.6,669.5 531.7,670.5 533.8,670.5 535.9,670.5 538.0,670.5 540.1,670.5 542.1,669.5 544.2,670.5 546.3,669.5 548.4,670.5 550.4,669.5 552.5,667.5 554.5,665.5 557.1,666.5 559.6,667.5 562.2,668.5 564.2,667.5 566.3,667.5 568.3,668.5 570.3,668.5 572.4,667.5 574.4,667.5 576.4,668.5 578.5,667.5 580.5,668.5 582.5,668.5 584.6,668.5 586.6,668.5 588.6,668.5 590.7,668.5 592.7,667.5 594.7,668.5 596.7,668.5 598.8,668.5 600.8,668.5 602.8,667.5 604.9,667.5 606.9,667.5 608.9,668.5 611.0,667.5 613.0,667.5 615.0,667.5 617.1,667.5 619.1,667.5 621.1,667.5 623.2,667.5 625.2,668.5 627.3,664.5 629.3,662.5 631.4,659.5 633.5,659.5 635.7,659.5 637.8,660.5 640.0,660.5 642.1,659.5 644.3,659.5 646.4,660.5 648.6,660.5 650.7,659.5 652.9,660.5 655.0,660.5"/>
<polyline fill="none" stroke="#202078" stroke-width="1" points="260.3,652.8 262.7,652.5 265.1,652.5 267.6,652.5 270.0,652.5 272.6,655.5 274.7,654.5 276.8,654.5 278.9,653.5 281.0,652.5 283.1,652.5 284.9,657.5 287.1,656.5 289.3,656.5 291.5,656.5 293.7,656.5 295.4,637.5 296.3,664.5 298.9,656.5 301.0,655.5 303.0,655.5 305.1,656.5 307.2,656.5 309.3,655.5 311.3,655.5 313.4,656.5 315.5,656.5 317.5,655.5 319.6,655.5 321.7,656.5 323.7,655.5 325.8,655.5 327.9,655.5 330.0,655.5 332.0,655.5 334.1,655.5 336.3,653.5 338.5,652.5 340.7,652.5 342.9,651.5 346.4,628.5 348.1,650.5 351.0,652.5 353.6,650.5 356.1,649.5 358.7,648.5 360.7,641.5 362.8,634.5 364.8,627.5 367.1,627.5 369.4,627.5 371.6,627.5 373.9,626.5 376.2,627.5 378.3,632.5 380.3,637.5 382.4,642.5 384.7,644.5 387.0,646.5 389.3,647.5 391.6,649.5 393.9,651.5 396.2,653.5 400.0,644.5 402.3,647.5 404.7,651.5 407.0,655.5 409.0,656.5 411.0,656.5 413.0,658.5 415.2,657.5 417.4,657.5 419.6,657.5 421.9,657.5 424.1,656.5 426.3,657.5 428.5,656.5 430.7,656.5 432.9,656.5 435.1,656.5 437.2,656.5 439.4,656.5 441.6,656.5 443.8,656.5 445.4,639.5 447.4,639.5 449.5,639.5 451.5,639.5 454.6,650.5 456.6,650.5 458.6,651.5 460.6,650.5 462.6,651.5 464.6,651.5 466.6,651.5 468.6,651.5 470.6,652.5 472.6,652.5 474.6,652.5 476.9,639.5 480.0,639.5 483.8,653.5 485.9,650.5 487.9,648.5 490.0,645.5 492.3,647.5 494.6,650.5 496.9,652.5 499.2,654.5 502.3,651.5 504.3,652.5 506.4,651.5 508.4,651.5 510.5,651.5 512.5,651.5 514.6,650.5 516.6,651.5 518.7,650.5 520.7,650.5 522.8,650.5 524.8,651.5 526.9,650.5 528.9,650.5 531.0,650.5 533.0,651.5 535.1,650.5 537.1,650.5 539.2,650.5 541.2,651.5 543.3,651.5 545.3,651.5 547.4,650.5 549.4,650.5 551.5,650.5 553.5,650.5 555.6,650.5 557.6,650.5 559.6,650.5 561.7,650.5 563.7,650.5 565.7,650.5 567.8,650.5 569.8,650.5 571.8,650.5 573.9,650.5 575.9,650.5 578.0,650.5 580.0,650.5 582.0,651.5 584.1,650.5 586.1,650.5 588.1,650.5 590.2,650.5 592.2,650.5 594.2,651.5 596.3,651.5 598.3,651.5 600.3,651.5 602.4,650.5 604.4,650.5 606.4,650.5 608.5,651.5 610.5,650.5 612.6,650.5 614.6,650.5 616.6,650.5 618.7,650.5 620.7,650.5 622.7,650.5 624.8,650.5 626.8,651.5 629.4,653.5 631.9,655.5 634.5,658.5 637.1,660.5 639.6,663.5 642.2,665.5 644.3,666.5 646.5,667.5 648.6,668.5 650.7,669.5 652.9,669.5 655.0,670.5"/>
<polyline fill="none" stroke="#189818" stroke-width="1" points="260.3,654.5 262.3,655.5 264.4,655.5 266.4,657.5 268.6,650.5 270.8,644.5 272.6,650.5 274.8,651.5 277.0,653.5 279.2,654.5 281.4,656.5 284.0,652.5 287.5,638.5 290.1,644.5 293.7,653.5 295.4,666.5 298.9,646.5 301.5,645.5 304.2,644.5 306.3,646.5 308.4,646.5 310.6,648.5 312.7,649.5 314.8,651.5 317.0,650.5 319.2,650.5 321.4,651.5 323.6,650.5 325.8,650.5 328.0,651.5 330.0,653.5 332.1,655.5 334.1,657.5 336.8,658.5 339.4,659.5 342.0,659.5 344.6,658.5 346.4,673.5 348.1,680.5 350.3,680.5 352.5,680.5 354.7,673.5 356.9,667.5 359.0,665.5 361.0,662.5 363.1,659.5 365.7,664.5 365.7,680.5 367.7,680.5 369.7,680.5 371.7,680.5 373.7,681.5 375.7,680.5 377.7,681.5 379.8,681.5 381.8,680.5 383.8,681.5 385.8,680.5 387.8,680.5 389.8,680.5 391.8,681.5 393.8,680.5 395.8,680.5 397.8,681.5 399.8,680.5 401.8,680.5 403.8,681.5 405.8,681.5 407.9,680.5 409.9,681.5 411.9,681.5 413.9,681.5 415.9,681.5 417.9,680.5 419.9,681.5 421.9,680.5 423.9,681.5 425.9,681.5 427.9,680.5 429.9,681.5 431.9,680.5 433.9,681.5 435.9,681.5 438.0,681.5 440.0,681.5 442.0,680.5 444.0,681.5 446.0,681.5 448.0,681.5 450.0,681.5 452.3,679.5 454.6,678.5 456.9,676.5 459.2,674.5 461.5,675.5 463.8,676.5 466.1,677.5 468.4,679.5 470.7,680.5 473.0,681.5 475.0,681.5 477.0,681.5 479.0,680.5 481.0,680.5 483.0,681.5 485.1,680.5 487.1,680.5 489.1,680.5 491.1,680.5 493.1,680.5 495.1,680.5 497.1,680.5 499.1,680.5 501.1,680.5 503.1,680.5 505.1,680.5 507.1,680.5 509.1,680.5 511.2,680.5 513.2,680.5 515.2,680.5 517.2,680.5 519.2,680.5 521.2,679.5 523.2,680.5 525.2,680.5 527.2,679.5 529.2,679.5 531.2,679.5 533.2,679.5 535.3,679.5 537.3,679.5 539.3,679.5 541.3,679.5 543.3,679.5 545.3,679.5 546.8,675.5 548.9,674.5 551.0,675.5 553.1,675.5 555.2,675.5 557.3,675.5 559.4,675.5 561.5,675.5 563.6,674.5 565.7,675.5 567.8,675.5 569.9,675.5 572.0,675.5 574.0,675.5 576.1,675.5 578.2,675.5 580.2,674.5 582.3,675.5 584.4,674.5 586.5,674.5 588.5,675.5 590.6,675.5 592.7,675.5 594.7,675.5 596.8,675.5 598.9,675.5 600.9,675.5 603.0,675.5 605.1,675.5 607.1,676.5 609.2,676.5 611.3,675.5 613.4,675.5 615.4,675.5 617.5,676.5 619.6,675.5 621.6,676.5 623.7,676.5 626.0,669.5 628.3,662.5 630.6,653.5 632.9,643.5 635.2,633.5 637.5,624.5 639.6,625.5 641.6,625.5 643.7,626.5 646.3,629.5 648.8,632.5 651.4,636.5 655.0,635.5"/>
<polyline fill="none" stroke="#f0f020" stroke-width="1" points="655.0,652.4 657.0,652.5 659.1,652.5 661.1,652.5 663.1,653.5 665.1,652.5 667.2,653.5 669.2,653.5 671.2,653.5 673.3,653.5 675.3,654.5 677.4,654.5 679.5,653.5 681.6,654.5 683.7,654.5 685.8,654.5 687.9,654.5 690.0,654.5 692.1,654.5 694.2,654.5 696.3,654.5 698.4,655.5 700.5,654.5 702.9,654.5 705.2,654.5 707.6,654.5 709.9,654.5 712.3,654.5 714.3,654.5 716.3,655.5 718.4,656.5 720.4,657.5 722.4,658.5 724.9,662.5 727.4,665.5 729.4,665.5 731.4,666.5 733.5,666.5 735.5,666.5 737.5,666.5 739.5,666.5 741.5,666.5 743.5,667.5 745.5,667.5 747.5,666.5 749.5,666.5 751.5,666.5 753.5,666.5 755.5,666.5 757.5,667.5 759.5,666.5 761.5,666.5 763.5,666.5 765.5,666.5 767.5,667.5 769.5,666.5 771.5,666.5 773.5,666.5 775.5,667.5 777.5,666.5 779.5,666.5 781.5,667.5 783.5,667.5 785.5,667.5 787.5,667.5 789.5,667.5 791.5,666.5 793.5,667.5 795.5,666.5 797.5,667.5 799.5,667.5 801.5,667.5 803.6,666.5 805.6,667.5 807.7,667.5 809.7,666.5 811.8,666.5 813.8,667.5 815.9,667.5 817.9,666.5 820.0,667.5 822.1,667.5 824.1,666.5 826.2,667.5 828.2,666.5 830.3,666.5 832.3,667.5 834.4,666.5 836.4,667.5 838.5,666.5 840.6,666.5 842.6,667.5 844.7,666.5 846.7,666.5 848.8,666.5 850.8,667.5 852.9,666.5 854.9,666.5 857.0,666.5 858.8,660.5"/>
<polyline fill="none" stroke="#30d8e0" stroke-width="1" points="673.6,614.5 676.1,619.5 678.5,624.5 681.0,630.5 683.4,630.5 685.7,632.5 688.0,632.5 690.4,633.5 692.5,629.5 694.6,624.5 696.7,619.5 698.8,615.5 700.5,618.5 702.7,627.5 705.0,636.5 707.2,645.5 709.5,649.5 711.7,653.5 714.0,656.5 716.4,657.5 718.7,658.5 721.1,659.5 723.4,659.5 725.8,660.5 728.0,661.5 730.1,662.5 732.3,662.5 734.4,663.5 736.6,664.5 738.7,665.5 740.9,665.5 743.0,666.5 745.0,666.5 747.1,666.5 749.2,666.5 751.2,666.5 753.3,666.5 755.4,667.5 757.5,667.5 759.5,667.5 761.6,667.5 763.7,667.5 765.7,668.5 767.8,668.5 769.8,668.5 771.9,668.5 773.9,668.5 775.9,668.5 777.9,668.5 780.0,668.5 782.0,668.5 784.0,668.5 786.0,668.5 788.1,668.5 790.1,668.5 792.1,668.5 794.2,668.5 796.2,668.5 798.2,668.5 800.2,668.5 802.3,668.5 804.3,668.5 806.3,668.5 808.3,668.5 810.4,668.5 812.4,668.5 814.4,668.5 816.5,668.5 818.5,668.5 820.5,668.5 822.5,668.5 824.6,668.5 826.6,668.5 828.6,668.5 830.6,668.5 832.7,668.5 834.7,668.5 836.7,668.5 838.8,668.5 840.8,668.5 842.8,668.5 844.8,668.5 846.9,668.5 848.9,668.5 850.9,668.5 852.9,668.5 855.0,668.5 857.0,668.5 860.4,654.5 863.8,642.5 866.3,639.5 868.9,637.5 872.0,614.5"/>
<polyline fill="none" stroke="#600080" stroke-width="1" points="655.0,646.5 657.0,646.5 659.1,645.5 661.1,645.5 663.1,645.5 665.1,644.5 667.2,645.5 669.2,645.5 671.2,644.5 673.3,644.5 675.3,644.5 677.5,643.5 679.8,643.5 682.0,643.5 684.2,643.5 686.5,642.5 688.7,642.5 691.1,642.5 693.4,642.5 695.8,642.5 698.1,642.5 700.5,642.5 702.7,642.5 705.0,643.5 707.2,644.5 709.5,642.5 711.7,641.5 714.0,640.5 716.2,637.5 718.5,635.5 720.7,632.5 723.2,625.5 725.8,618.5 727.4,614.5"/>
<polyline fill="none" stroke="#600080" stroke-width="1" points="858.5,615.0 859.5,681.5"/>
<polyline fill="none" stroke="#c01818" stroke-width="1" points="655.0,660.5 657.1,660.5 659.1,660.5 661.2,660.5 663.3,660.5 665.3,660.5 667.4,660.5 669.5,660.5 671.5,660.5 673.6,660.5 675.7,660.5 677.8,660.5 679.8,660.5 681.9,660.5 684.0,660.5 686.0,660.5 688.1,660.5 690.2,660.5 692.2,660.5 694.3,660.5 696.4,660.5 698.4,660.5 700.5,660.5 702.2,654.5 704.7,650.5 707.2,645.5 709.2,644.5 711.2,643.5 713.3,641.5 715.3,640.5 717.3,638.5 719.4,636.5 721.5,634.5 723.7,631.5 725.8,628.5 727.9,625.5 730.0,623.5 732.1,620.5 734.2,617.5 736.7,616.5 739.2,616.5 742.6,622.5 744.7,621.5 746.8,621.5 748.9,621.5 751.0,620.5 753.1,620.5 755.2,619.5 757.3,619.5 759.4,618.5 761.5,617.5 763.6,617.5 765.7,617.5 767.8,617.5 771.2,622.5 773.5,622.5 775.7,622.5 778.0,622.5 780.2,622.5 782.5,622.5 784.7,622.5 786.8,621.5 788.9,621.5 791.0,621.5 793.1,621.5 795.2,620.5 797.3,620.5 799.4,620.5 801.5,620.5 803.7,620.5 805.8,619.5 807.9,619.5 810.0,619.5 812.1,619.5 814.2,618.5 816.3,618.5 818.4,618.5 820.4,618.5 822.5,618.5 824.5,618.5 826.5,618.5 828.6,618.5 830.6,618.5 832.6,618.5 834.7,618.5 836.7,617.5 838.7,617.5 840.7,618.5 842.8,617.5 844.8,617.5 846.8,617.5 848.9,617.5 850.9,617.5 852.9,617.5 855.0,617.5 857.0,617.5 858.8,622.5 859.6,630.5 862.0,630.5 864.3,630.5 866.6,631.5 869.0,631.5"/>
<polyline fill="none" stroke="#303090" stroke-width="1" points="655.0,670.9 657.4,671.5 659.7,672.5 662.1,672.5 664.4,673.5 666.8,674.5 669.0,674.5 671.2,674.5 673.4,675.5 675.6,675.5 677.8,675.5 679.9,675.5 682.1,675.5 684.3,676.5 686.5,676.5 688.7,676.5 691.1,676.5 693.4,677.5 695.8,677.5 698.1,677.5 700.5,677.5 702.2,657.5 704.7,656.5 707.2,656.5 709.3,656.5 711.4,656.5 713.5,656.5 715.7,657.5 717.8,657.5 719.9,657.5 722.0,657.5 724.1,658.5 726.1,658.5 728.1,659.5 730.2,660.5 732.2,660.5 734.2,661.5 736.2,661.5 738.2,661.5 740.2,661.5 742.2,661.5 744.2,661.5 746.3,661.5 748.3,662.5 750.3,662.5 752.3,661.5 754.3,661.5 756.3,661.5 758.3,661.5 760.3,661.5 762.3,662.5 764.3,661.5 766.4,661.5 768.4,661.5 770.4,661.5 772.4,662.5 774.4,661.5 776.4,661.5 778.4,661.5 780.4,661.5 782.4,661.5 784.4,661.5 786.5,661.5 788.5,662.5 790.5,661.5 792.5,661.5 794.5,662.5 796.5,661.5 798.5,662.5 800.5,661.5 802.5,662.5 804.5,662.5 806.5,661.5 808.6,662.5 810.6,662.5 812.6,661.5 814.6,661.5 816.6,662.5 818.6,662.5 820.6,661.5 822.6,662.5 824.6,662.5 826.6,661.5 828.7,662.5 830.7,661.5 832.7,662.5 834.7,662.5 836.7,662.5 838.7,662.5 840.7,661.5 842.7,662.5 844.7,662.5 846.7,662.5 848.8,662.5 850.8,662.5 852.8,662.5 854.8,662.5 856.8,661.5 858.8,662.5 858.8,628.5 860.8,628.5 862.9,627.5 864.9,627.5 867.0,627.5 869.0,628.5"/>
<polyline fill="none" stroke="#30c830" stroke-width="1" points="655.0,635.6 656.7,633.5 660.1,637.5 662.2,637.5 664.3,637.5 666.4,637.5 668.5,637.5 670.7,636.5 672.8,637.5 674.9,637.5 677.0,637.5 679.5,625.5 681.6,629.5 683.7,633.5 686.7,634.5 689.6,635.5 692.5,633.5 695.5,630.5 698.8,615.5 700.8,615.5 702.8,615.5 704.8,615.5 706.8,615.5 708.8,615.5 710.8,615.5 712.8,615.5 714.8,615.5 716.8,616.5 718.8,616.5 720.9,616.5 722.9,616.5 724.9,616.5 726.9,616.5 728.9,616.5 730.9,616.5 732.9,616.5 734.9,616.5 736.9,616.5 738.9,616.5 740.9,617.5 743.4,620.5 746.0,616.5 748.0,615.5 750.0,615.5 752.1,615.5 754.1,616.5 756.1,615.5 758.1,616.5 760.1,616.5 762.1,615.5 764.2,615.5 766.2,616.5 768.2,615.5 770.2,615.5 772.2,616.5 774.3,615.5 776.3,616.5 778.3,615.5 780.3,616.5 782.3,616.5 784.3,615.5 786.4,615.5 788.4,615.5 790.4,616.5 792.4,615.5 794.4,615.5 796.5,616.5 798.5,616.5 800.5,616.5 802.5,616.5 804.5,616.5 806.5,615.5 808.6,616.5 810.6,615.5 812.6,616.5 814.6,616.5 816.6,615.5 818.7,616.5 820.7,616.5 822.7,615.5 824.7,615.5 826.7,616.5 828.7,616.5 830.8,615.5 832.8,616.5 834.8,616.5 836.8,615.5 838.8,616.5 840.9,615.5 842.9,616.5 844.9,616.5 846.9,616.5 848.9,616.5 850.9,615.5 853.0,616.5 855.0,616.5 857.0,616.5 858.8,617.5 860.4,681.5 862.5,681.5 864.7,680.5 866.9,680.5 869.0,681.5"/>
<rect x="860" y="627" width="9" height="3" fill="#f0f020"/>
<polyline fill="none" stroke="#a8a020" stroke-width="1" points="869.0,628.8 871.5,628.5 874.0,628.5 876.5,629.5 879.0,628.5 881.6,628.5 884.1,628.5 886.6,628.5 889.1,628.5 891.6,628.5 894.1,628.5 896.6,628.5 899.1,628.5 901.6,628.5 904.2,628.5 906.7,628.5 909.2,628.5 911.7,628.5 914.2,628.5 916.7,628.5 919.2,628.5 921.7,628.5 924.2,628.5 926.8,628.5 929.3,628.5 931.8,628.5 934.3,628.5 936.8,628.5 939.3,628.5 941.8,628.5 944.3,628.5 946.9,628.5 949.4,628.5 951.9,628.5 954.4,628.5 956.9,628.5 959.4,628.5 961.9,628.5 964.4,628.5 966.9,628.5 969.5,628.5 972.0,628.5 974.5,628.5 977.0,628.5 979.5,628.5 982.0,628.5 984.5,628.5 987.0,628.5 989.5,628.5 992.1,628.5 994.6,628.5 997.1,628.5 999.6,628.5 1002.1,628.5 1004.6,628.5 1007.1,628.5 1009.6,628.5 1012.1,628.5 1014.7,628.5 1017.2,628.5 1019.7,628.5 1022.2,628.5 1024.7,628.5 1027.2,628.5 1029.7,628.5 1032.2,628.5 1034.8,628.5 1037.3,628.5 1039.8,628.5 1042.3,628.5 1044.8,628.5 1047.3,628.5 1049.8,628.5 1052.3,628.5 1054.8,628.5 1057.4,628.5 1059.9,628.5 1062.4,628.5 1064.9,628.5 1067.4,628.5 1069.9,628.5 1072.4,628.5 1074.9,628.5 1077.4,628.5 1080.0,628.5 1082.5,628.5 1085.0,628.5 1087.5,628.5 1090.0,628.5 1092.6,628.5 1095.2,628.5 1097.8,628.5 1100.4,628.5 1103.0,628.5 1105.6,628.5 1108.2,628.5 1110.8,628.5 1113.4,628.5 1116.0,628.5 1118.6,629.5 1121.2,628.5 1123.8,629.5 1126.4,629.5 1129.1,629.5 1131.8,629.5 1134.5,630.5 1137.1,630.5 1139.8,630.5 1142.5,631.5 1145.2,632.5 1147.9,633.5 1150.6,635.5 1153.3,636.5 1156.0,638.5 1158.7,639.5 1161.4,640.5 1164.1,642.5 1166.8,643.5 1169.6,644.5 1172.4,644.5 1175.3,646.5 1178.1,646.5 1180.9,647.5 1183.9,646.5 1187.0,645.5 1190.0,644.5 1193.0,643.5 1195.5,643.5 1198.1,644.5 1200.7,643.5 1203.2,644.5 1206.2,645.5 1209.2,646.5 1212.3,647.5 1215.3,648.5 1218.3,648.5 1221.3,648.5 1224.4,648.5 1227.4,649.5 1230.1,649.5 1232.8,648.5 1235.5,648.5 1238.2,648.5 1240.9,647.5 1243.6,647.5 1246.6,646.5 1249.7,645.5 1252.7,645.5 1255.7,644.5 1258.7,643.5 1261.8,642.5 1264.8,641.5 1267.8,641.5 1270.3,641.5 1272.8,642.5 1275.4,642.5 1277.9,643.5 1281.5,640.5 1285.0,638.5 1288.5,641.5 1292.1,644.5 1295.7,644.5"/>
<polyline fill="none" stroke="#20a8a8" stroke-width="1" points="1156.7,614.5 1159.2,618.5 1161.8,623.5 1164.3,628.5 1166.8,632.5 1169.6,634.5 1172.4,637.5 1175.3,639.5 1178.1,641.5 1180.9,644.5 1183.9,646.5 1187.0,647.5 1190.0,649.5 1193.0,651.5 1195.8,649.5 1198.7,647.5 1201.5,645.5 1204.4,644.5 1207.2,642.5 1210.2,643.5 1213.2,644.5 1216.3,646.5 1219.3,647.5 1222.3,649.5 1225.3,651.5 1228.4,653.5 1231.4,655.5 1234.1,654.5 1236.8,653.5 1239.5,652.5 1242.5,654.5 1245.5,656.5 1248.6,658.5 1251.6,660.5 1254.1,658.5 1256.7,656.5 1259.2,654.5 1261.8,652.5 1264.3,651.5 1266.8,650.5 1269.4,648.5 1271.9,647.5 1274.7,646.5 1277.5,646.5 1280.4,645.5 1283.2,644.5 1286.0,644.5 1289.2,645.5 1292.5,646.5 1295.7,647.5"/>
<polyline fill="none" stroke="#580070" stroke-width="1" points="999.6,681.0 1002.2,680.5 1004.8,680.5 1007.4,681.5 1009.9,680.5 1012.5,680.5 1015.1,680.5 1017.7,680.5 1020.3,680.5 1022.9,680.5 1025.5,680.5 1028.1,680.5 1030.6,680.5 1033.2,680.5 1035.8,680.5 1038.4,680.5 1041.0,680.5 1043.6,679.5 1046.1,680.5 1048.7,679.5 1051.3,679.5 1053.9,679.5 1056.5,679.5 1059.0,678.5 1061.6,679.5 1064.2,678.5 1066.8,678.5 1069.4,678.5 1071.9,678.5 1074.5,678.5 1077.1,678.5 1079.7,678.5 1082.3,678.5 1084.8,678.5 1087.4,677.5 1090.0,677.5 1092.5,677.5 1095.0,677.5 1097.6,677.5 1100.1,677.5 1102.6,677.5 1105.2,677.5 1107.7,677.5 1110.2,677.5 1112.7,676.5 1115.2,676.5 1117.8,676.5 1120.3,677.5 1122.8,676.5 1125.4,677.5 1127.9,676.5 1130.4,676.5 1132.9,676.5 1135.5,675.5 1138.0,674.5 1140.5,674.5 1143.0,673.5 1145.6,673.5 1148.1,672.5 1150.6,671.5 1153.1,671.5 1155.7,670.5 1158.2,670.5 1160.7,669.5 1163.4,668.5 1166.1,668.5 1168.8,667.5 1171.5,667.5 1174.2,666.5 1176.9,665.5 1179.6,665.5 1182.3,664.5 1185.0,664.5 1187.6,664.5 1190.3,664.5 1192.9,663.5 1195.6,663.5 1198.2,663.5 1200.8,663.5 1203.5,663.5 1206.1,662.5 1208.7,662.5 1211.4,662.5 1214.0,662.5 1216.7,662.5 1219.3,662.5 1222.1,662.5 1224.8,662.5 1227.6,662.5 1230.4,662.5 1233.2,662.5 1236.0,662.5 1238.7,662.5 1241.5,662.5 1244.0,662.5 1246.6,663.5 1249.1,663.5 1251.7,663.5 1254.2,663.5 1256.7,663.5 1259.3,664.5 1261.8,664.5 1264.6,664.5 1267.4,665.5 1270.3,665.5 1273.1,665.5 1275.9,666.5 1279.0,665.5 1282.0,664.5 1284.7,666.5 1287.3,668.5 1290.0,670.5 1292.8,667.5 1295.7,664.5"/>
<polyline fill="none" stroke="#b01818" stroke-width="1" points="869.0,631.4 870.0,632.5 872.5,632.5 875.0,633.5 877.6,633.5 880.1,634.5 882.6,634.5 885.1,635.5 887.7,635.5 890.2,636.5 892.7,636.5 895.2,637.5 897.8,637.5 900.3,638.5 902.8,638.5 905.4,639.5 907.9,639.5 910.4,640.5 912.9,641.5 915.5,641.5 918.0,641.5 920.5,642.5 923.0,642.5 925.5,642.5 928.1,643.5 930.6,643.5 933.1,643.5 935.6,644.5 938.2,644.5 940.7,645.5 943.2,645.5 945.8,646.5 948.3,646.5 950.8,646.5 953.3,647.5 955.9,647.5 958.4,648.5 960.9,648.5 963.4,648.5 966.0,649.5 968.5,649.5 971.0,649.5 973.5,650.5 976.0,650.5 978.6,650.5 981.1,650.5 983.6,651.5 986.1,651.5 988.7,652.5 991.2,652.5 993.7,652.5 996.2,652.5 998.8,653.5 1001.3,653.5 1003.8,653.5 1006.4,653.5 1008.9,654.5 1011.4,654.5 1013.9,655.5 1016.5,655.5 1019.0,655.5 1021.5,655.5 1024.0,656.5 1026.5,656.5 1029.1,656.5 1031.6,656.5 1034.1,656.5 1036.7,657.5 1039.2,657.5 1041.7,657.5 1044.2,657.5 1046.8,657.5 1049.3,657.5 1051.8,658.5 1054.3,658.5 1056.8,658.5 1059.4,658.5 1061.9,658.5 1064.4,659.5 1067.0,659.5 1069.5,659.5 1072.0,660.5 1074.5,659.5 1077.1,660.5 1079.6,660.5 1082.2,660.5 1084.7,660.5 1087.3,660.5 1089.8,660.5 1092.4,661.5 1094.9,660.5 1097.5,661.5 1100.0,661.5 1102.5,661.5 1105.1,661.5 1107.6,661.5 1110.1,662.5 1112.7,661.5 1115.2,662.5 1117.7,662.5 1120.3,662.5 1122.8,662.5 1125.3,662.5 1127.9,663.5 1130.4,663.5 1132.9,664.5 1135.5,664.5 1138.0,665.5 1140.5,665.5 1143.0,666.5 1145.6,666.5 1148.1,667.5 1150.6,667.5 1153.1,668.5 1155.7,668.5 1158.2,668.5 1160.7,669.5 1163.2,670.5 1165.8,670.5 1168.3,670.5 1170.8,670.5 1173.3,670.5 1175.9,671.5 1178.4,671.5 1180.9,671.5 1183.7,671.5 1186.6,671.5 1189.4,670.5 1192.3,669.5 1195.1,669.5 1197.6,669.5 1200.1,670.5 1202.7,671.5 1205.2,670.5 1207.7,671.5 1210.2,671.5 1212.8,672.5 1215.3,672.5 1217.8,672.5 1220.3,672.5 1222.9,672.5 1225.4,672.5 1227.9,672.5 1230.5,672.5 1233.0,672.5 1235.5,672.5 1238.1,672.5 1240.8,671.5 1243.4,670.5 1246.0,670.5 1248.7,669.5 1251.3,668.5 1253.9,668.5 1256.5,667.5 1259.2,666.5 1261.8,666.5 1264.3,666.5 1266.8,665.5 1269.4,665.5 1271.9,665.5 1274.4,665.5 1277.0,666.5 1279.5,667.5 1282.0,667.5 1286.0,664.5 1289.2,666.5 1292.5,667.5 1295.7,669.5"/>
<polyline fill="none" stroke="#202078" stroke-width="1" points="869.0,627.2 871.5,627.5 874.0,627.5 876.5,627.5 879.1,627.5 881.6,627.5 884.1,627.5 886.6,627.5 889.1,627.5 891.6,627.5 894.1,627.5 896.7,626.5 899.2,627.5 901.7,626.5 904.2,627.5 906.7,627.5 909.2,626.5 911.7,627.5 914.3,627.5 916.8,627.5 919.3,627.5 921.8,626.5 924.3,626.5 926.8,627.5 929.3,626.5 931.9,627.5 934.4,627.5 936.9,626.5 939.4,627.5 941.9,627.5 944.4,627.5 947.0,627.5 949.5,627.5 952.0,627.5 954.5,627.5 957.0,627.5 959.5,627.5 962.0,627.5 964.6,627.5 967.1,627.5 969.6,627.5 972.1,627.5 974.6,627.5 977.1,627.5 979.6,626.5 982.2,627.5 984.7,627.5 987.2,627.5 989.7,627.5 992.2,627.5 994.7,627.5 997.2,626.5 999.8,627.5 1002.3,627.5 1004.8,627.5 1007.3,627.5 1009.8,627.5 1012.3,626.5 1014.8,627.5 1017.4,627.5 1019.9,627.5 1022.4,626.5 1024.9,627.5 1027.4,627.5 1030.0,628.5 1032.5,628.5 1035.0,628.5 1037.5,629.5 1040.1,629.5 1042.6,629.5 1045.1,630.5 1047.6,630.5 1050.2,631.5 1052.7,631.5 1055.2,632.5 1057.9,632.5 1060.6,633.5 1063.2,633.5 1065.9,633.5 1068.6,633.5 1071.3,634.5 1073.9,634.5 1076.6,635.5 1079.3,636.5 1082.0,636.5 1084.6,636.5 1087.3,637.5 1090.0,637.5 1092.5,637.5 1095.0,638.5 1097.6,639.5 1100.1,639.5 1102.6,639.5 1105.2,640.5 1107.7,640.5 1110.2,641.5 1112.7,641.5 1115.2,642.5 1117.8,642.5 1120.3,643.5 1122.8,643.5 1125.4,644.5 1127.9,644.5 1130.4,645.5 1132.9,645.5 1135.5,646.5 1138.0,646.5 1140.5,647.5 1143.0,647.5 1145.5,648.5 1148.1,648.5 1150.6,648.5 1153.1,649.5 1155.7,649.5 1158.2,650.5 1160.7,650.5 1163.2,650.5 1165.8,651.5 1168.3,652.5 1170.8,652.5 1172.8,660.5 1176.9,653.5 1179.6,650.5 1182.3,649.5 1185.0,646.5 1187.0,647.5 1190.0,664.5 1192.5,664.5 1195.0,664.5 1197.6,664.5 1200.1,664.5 1202.9,660.5 1205.7,656.5 1208.4,653.5 1211.2,649.5 1213.8,644.5 1216.3,639.5 1219.8,639.5 1223.4,639.5 1226.1,641.5 1228.7,644.5 1231.4,647.5 1234.5,643.5 1237.5,639.5 1241.5,642.5 1242.6,651.5 1245.6,651.5 1248.6,651.5 1251.6,652.5 1254.1,652.5 1256.7,651.5 1259.2,651.5 1261.8,651.5 1264.3,651.5 1266.8,651.5 1269.4,651.5 1271.9,651.5 1274.7,651.5 1277.5,650.5 1280.4,649.5 1283.2,648.5 1286.0,648.5 1289.0,649.5 1292.0,651.5 1295.7,651.5"/>
<polyline fill="none" stroke="#189818" stroke-width="1" points="869.0,680.7 871.5,680.5 874.0,680.5 876.5,680.5 879.0,680.5 881.5,680.5 884.0,680.5 886.5,680.5 889.0,680.5 891.5,680.5 894.0,680.5 896.5,680.5 899.0,680.5 901.5,680.5 904.0,680.5 906.6,680.5 909.1,680.5 911.6,680.5 914.1,680.5 916.6,680.5 919.1,680.5 921.6,680.5 924.1,680.5 926.6,680.5 929.1,680.5 931.6,680.5 934.1,680.5 936.6,680.5 939.1,680.5 941.6,680.5 944.1,680.5 946.6,680.5 949.1,680.5 951.6,680.5 954.1,680.5 956.6,680.5 959.1,680.5 961.6,680.5 964.1,680.5 966.6,680.5 969.1,680.5 971.6,680.5 974.1,680.5 976.6,680.5 979.1,680.5 981.7,680.5 984.2,680.5 986.7,680.5 989.2,680.5 991.7,680.5 994.2,680.5 996.7,680.5 999.2,680.5 1001.7,680.5 1004.2,680.5 1006.7,680.5 1009.2,680.5 1011.7,680.5 1014.2,680.5 1016.7,680.5 1019.2,680.5 1021.7,680.5 1024.2,680.5 1026.7,680.5 1029.2,680.5 1031.7,680.5 1034.2,680.5 1036.7,680.5 1039.2,680.5 1041.7,680.5 1044.2,680.5 1046.7,680.5 1049.2,680.5 1051.7,680.5 1054.2,680.5 1056.8,680.5 1059.3,680.5 1061.8,680.5 1064.3,680.5 1066.8,680.5 1069.3,680.5 1071.8,680.5 1074.3,680.5 1076.8,680.5 1079.3,680.5 1081.8,680.5 1084.3,680.5 1086.8,680.5 1089.3,680.5 1091.8,680.5 1094.3,680.5 1096.8,680.5 1099.3,680.5 1101.8,680.5 1104.3,680.5 1106.8,680.5 1109.3,680.5 1111.8,680.5 1114.3,680.5 1116.8,680.5 1119.3,680.5 1121.8,680.5 1124.3,680.5 1126.8,680.5 1129.4,680.5 1131.9,680.5 1134.4,680.5 1136.9,680.5 1139.4,680.5 1141.9,680.5 1144.4,680.5 1146.9,680.5 1149.4,680.5 1151.9,680.5 1154.4,680.5 1156.9,680.5 1159.4,680.5 1161.9,680.5 1164.4,680.5 1166.9,680.5 1169.4,680.5 1171.9,680.5 1174.4,680.5 1176.9,680.5 1179.4,680.5 1181.9,680.5 1184.4,680.5 1186.9,680.5 1189.4,680.5 1191.9,680.5 1194.4,680.5 1196.9,680.5 1199.4,680.5 1201.9,680.5 1204.5,680.5 1207.0,680.5 1209.5,680.5 1212.0,680.5 1214.5,680.5 1217.0,680.5 1219.5,680.5 1222.0,680.5 1224.5,680.5 1227.0,680.5 1229.5,680.5 1232.0,680.5 1234.5,680.5 1237.0,680.5 1239.5,680.5 1242.3,680.5 1245.1,679.5 1247.9,678.5 1250.7,678.5 1253.4,677.5 1256.2,676.5 1259.0,675.5 1261.8,675.5 1264.4,675.5 1267.0,675.5 1269.6,675.5 1272.2,675.5 1274.8,674.5 1277.4,674.5 1280.0,674.5 1283.0,676.5 1286.0,678.5 1289.2,678.5 1292.5,677.5 1295.7,677.5"/>
</svg>
<line x1="654.5" y1="615" x2="654.5" y2="682" stroke="#000"/>
<line x1="869.5" y1="615" x2="869.5" y2="682" stroke="#000"/>
<text x="260.0" y="625" text-anchor="middle" class="ax">0</text>
<text x="400.7" y="625" text-anchor="middle" class="ax">10</text>
<text x="541.4" y="625" text-anchor="middle" class="ax">20</text>
<text x="682.1" y="625" text-anchor="middle" class="ax">30</text>
<text x="822.8" y="625" text-anchor="middle" class="ax">40</text>
<text x="963.5" y="625" text-anchor="middle" class="ax">50</text>
<text x="1104.2" y="625" text-anchor="middle" class="ax">60</text>
<text x="1244.9" y="625" text-anchor="middle" class="ax">70</text>
</svg>
<div class="a" style="left:242px;top:682px;width:1122px;height:19px;background:#f0f0f0;border-left:2px solid #6a6a6a"><div class="a" style="left:411px;top:8px;width:214px;height:2px;background:#8a8a8a"></div></div>
<div class="a" style="left:1364px;top:83px;width:2px;height:618px;background:#f0f0f0"></div>
<div id="status" class="a">
 <span style="left:3px">Ready</span>
 <span style="left:389px">Zoom: 822 to 1268 [2157]</span>
 <i style="left:566px"></i>
 <span style="left:571px">Start Time: 06:27:18.975</span>
 <i style="left:704px"></i>
 <span style="left:708px">Production Date: 00000000</span>
 <i style="left:858px"></i>
 <span style="left:863px">Firmware:03001100</span>
 <i style="left:1002px"></i>
</div>
</body></html>
